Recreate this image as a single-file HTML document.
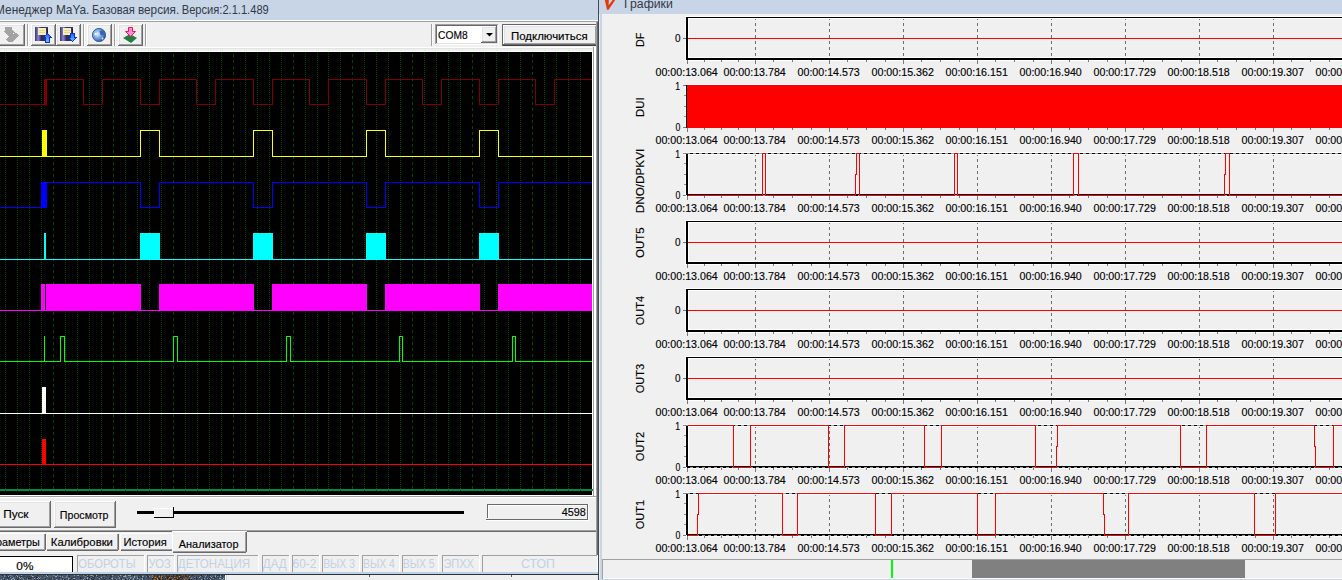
<!DOCTYPE html>
<html><head><meta charset="utf-8"><style>
html,body{margin:0;padding:0;width:1342px;height:580px;overflow:hidden;background:#f0f0f0}
svg{display:block}
text{font-family:"Liberation Sans",sans-serif}
</style></head><body>
<svg width="1342" height="580" viewBox="0 0 1342 580" shape-rendering="crispEdges">
<rect x="0" y="0" width="1342" height="580" fill="#f0f0f0" />
<rect x="0" y="0" width="598" height="20" fill="#c8d5e6" />
<text transform="translate(-4.95 14) scale(0.9643 1)" font-size="12.3" fill="#323a46" stroke="#323a46" stroke-width="0">Менеджер</text>
<text transform="translate(55.95 14) scale(0.9652 1)" font-size="12.3" fill="#323a46" stroke="#323a46" stroke-width="0">MaYa.</text>
<text transform="translate(92.00 14) scale(0.9115 1)" font-size="12.3" fill="#323a46" stroke="#323a46" stroke-width="0">Базовая</text>
<text transform="translate(137.98 14) scale(0.9552 1)" font-size="12.3" fill="#323a46" stroke="#323a46" stroke-width="0">версия.</text>
<text transform="translate(181.71 14) scale(0.9049 1)" font-size="12.3" fill="#323a46" stroke="#323a46" stroke-width="0">Версия:2.1.1.489</text>
<rect x="0" y="20" width="598" height="1" fill="#ffffff" />
<rect x="0" y="21" width="598" height="1" fill="#a0a0a0" />
<rect x="0" y="22" width="596" height="25" fill="#f0f0f0" />
<rect x="-2" y="24" width="27" height="22" fill="#f0f0f0" />
<rect x="-2" y="24" width="27" height="1" fill="#ffffff" />
<rect x="-2" y="24" width="1" height="22" fill="#ffffff" />
<rect x="-2" y="45" width="27" height="1" fill="#696969" />
<rect x="24" y="24" width="1" height="22" fill="#696969" />
<rect x="-1" y="44" width="25" height="1" fill="#a0a0a0" />
<rect x="23" y="25" width="1" height="20" fill="#a0a0a0" />
<rect x="-1" y="25" width="24" height="1" fill="#e3e3e3" />
<rect x="-1" y="25" width="1" height="19" fill="#e3e3e3" />
<rect x="27" y="24" width="1" height="22" fill="#a0a0a0" />
<rect x="28" y="24" width="1" height="22" fill="#ffffff" />
<rect x="31" y="24" width="25" height="22" fill="#f0f0f0" />
<rect x="31" y="24" width="25" height="1" fill="#ffffff" />
<rect x="31" y="24" width="1" height="22" fill="#ffffff" />
<rect x="31" y="45" width="25" height="1" fill="#696969" />
<rect x="55" y="24" width="1" height="22" fill="#696969" />
<rect x="32" y="44" width="23" height="1" fill="#a0a0a0" />
<rect x="54" y="25" width="1" height="20" fill="#a0a0a0" />
<rect x="32" y="25" width="22" height="1" fill="#e3e3e3" />
<rect x="32" y="25" width="1" height="19" fill="#e3e3e3" />
<rect x="56" y="24" width="25" height="22" fill="#f0f0f0" />
<rect x="56" y="24" width="25" height="1" fill="#ffffff" />
<rect x="56" y="24" width="1" height="22" fill="#ffffff" />
<rect x="56" y="45" width="25" height="1" fill="#696969" />
<rect x="80" y="24" width="1" height="22" fill="#696969" />
<rect x="57" y="44" width="23" height="1" fill="#a0a0a0" />
<rect x="79" y="25" width="1" height="20" fill="#a0a0a0" />
<rect x="57" y="25" width="22" height="1" fill="#e3e3e3" />
<rect x="57" y="25" width="1" height="19" fill="#e3e3e3" />
<rect x="83" y="24" width="1" height="22" fill="#a0a0a0" />
<rect x="84" y="24" width="1" height="22" fill="#ffffff" />
<rect x="87" y="24" width="25" height="22" fill="#f0f0f0" />
<rect x="87" y="24" width="25" height="1" fill="#ffffff" />
<rect x="87" y="24" width="1" height="22" fill="#ffffff" />
<rect x="87" y="45" width="25" height="1" fill="#696969" />
<rect x="111" y="24" width="1" height="22" fill="#696969" />
<rect x="88" y="44" width="23" height="1" fill="#a0a0a0" />
<rect x="110" y="25" width="1" height="20" fill="#a0a0a0" />
<rect x="88" y="25" width="22" height="1" fill="#e3e3e3" />
<rect x="88" y="25" width="1" height="19" fill="#e3e3e3" />
<rect x="114" y="24" width="1" height="22" fill="#a0a0a0" />
<rect x="115" y="24" width="1" height="22" fill="#ffffff" />
<rect x="118" y="24" width="25" height="22" fill="#f0f0f0" />
<rect x="118" y="24" width="25" height="1" fill="#ffffff" />
<rect x="118" y="24" width="1" height="22" fill="#ffffff" />
<rect x="118" y="45" width="25" height="1" fill="#696969" />
<rect x="142" y="24" width="1" height="22" fill="#696969" />
<rect x="119" y="44" width="23" height="1" fill="#a0a0a0" />
<rect x="141" y="25" width="1" height="20" fill="#a0a0a0" />
<rect x="119" y="25" width="22" height="1" fill="#e3e3e3" />
<rect x="119" y="25" width="1" height="19" fill="#e3e3e3" />
<rect x="145" y="24" width="1" height="22" fill="#a0a0a0" />
<rect x="146" y="24" width="1" height="22" fill="#ffffff" />
<rect x="431" y="24" width="1" height="22" fill="#a0a0a0" />
<rect x="432" y="24" width="1" height="22" fill="#ffffff" />
<path d="M5 27 L12 27 L12 30 L14 32 L16 33 L19 35 L16 38 L13 41 L12 42 L9 42 L6 40 L6 39 L9 37 L4 32 L4 31 L5 30 Z" fill="#a3a3a3" stroke="none" stroke-width="1" />
<rect x="13" y="33" width="1" height="1" fill="#ffffff" />
<defs><linearGradient id="fl" x1="0" y1="0" x2="1" y2="0"><stop offset="0" stop-color="#3a3470"/><stop offset="0.25" stop-color="#8a84d0"/><stop offset="0.5" stop-color="#2e2a5a"/><stop offset="1" stop-color="#3c3868"/></linearGradient><linearGradient id="ar" x1="0" y1="0" x2="0" y2="1"><stop offset="0" stop-color="#1060ff"/><stop offset="1" stop-color="#80c0ff"/></linearGradient><radialGradient id="gl" cx="0.38" cy="0.42" r="0.65"><stop offset="0" stop-color="#e4effc"/><stop offset="0.5" stop-color="#7aa4dc"/><stop offset="1" stop-color="#1f4f9a"/></radialGradient></defs>
<rect x="35" y="27" width="13" height="14" fill="url(#fl)" />
<rect x="38" y="28" width="8" height="7" fill="#f6f0b8" />
<rect x="39" y="30" width="6" height="1" fill="#e2d890" />
<rect x="39" y="32" width="6" height="1" fill="#e2d890" />
<rect x="47" y="29" width="1" height="12" fill="#1a1838" />
<path d="M47.5 33.5 L51.5 37.5 L49.5 37.5 L49.5 42.5 L45.5 42.5 L45.5 37.5 L43.5 37.5 Z" fill="url(#ar)" stroke="#0a30d0" stroke-width="1" />
<rect x="60" y="27" width="13" height="14" fill="url(#fl)" />
<rect x="63" y="28" width="8" height="7" fill="#f6f0b8" />
<rect x="64" y="30" width="6" height="1" fill="#e2d890" />
<rect x="64" y="32" width="6" height="1" fill="#e2d890" />
<rect x="72" y="29" width="1" height="12" fill="#1a1838" />
<path d="M70.5 33.5 L74.5 33.5 L74.5 37.5 L76.5 37.5 L72.5 41.5 L68.5 37.5 L70.5 37.5 Z" fill="url(#ar)" stroke="#0a30d0" stroke-width="1" />
<circle cx="99" cy="35" r="6.6" fill="url(#gl)" stroke="#2a5aa8" stroke-width="0.9" shape-rendering="auto"/>
<path d="M99.5 31 L103 30.5 L104.5 33 L103 35.5 L100.5 35 Z" fill="#3568b0" shape-rendering="auto"/>
<circle cx="95.5" cy="34" r="1" fill="#ffffff" shape-rendering="auto"/>
<circle cx="102.5" cy="38.5" r="0.9" fill="#f0f8ff" shape-rendering="auto"/>
<path d="M123 38 L130 34 L137 38 L131 43 Z" fill="#237c3e" stroke="none" stroke-width="1" shape-rendering="auto"/>
<path d="M128.5 27.5 L132.5 27.5 L132.5 31.5 L135.5 31.5 L130.5 36.5 L125.5 31.5 L128.5 31.5 Z" fill="#f590e0" stroke="#ff1040" stroke-width="1" shape-rendering="auto"/>
<rect x="435" y="24" width="63" height="20" fill="#ffffff" />
<rect x="435" y="24" width="63" height="1" fill="#a0a0a0" />
<rect x="435" y="24" width="1" height="20" fill="#a0a0a0" />
<rect x="436" y="25" width="61" height="1" fill="#696969" />
<rect x="436" y="25" width="1" height="18" fill="#696969" />
<rect x="435" y="44" width="64" height="1" fill="#ffffff" />
<rect x="498" y="24" width="1" height="21" fill="#ffffff" />
<rect x="436" y="43" width="62" height="1" fill="#e3e3e3" />
<rect x="497" y="25" width="1" height="19" fill="#e3e3e3" />
<rect x="481" y="26" width="16" height="17" fill="#f0f0f0" />
<rect x="481" y="26" width="16" height="1" fill="#ffffff" />
<rect x="481" y="26" width="1" height="17" fill="#ffffff" />
<rect x="481" y="42" width="16" height="1" fill="#696969" />
<rect x="496" y="26" width="1" height="17" fill="#696969" />
<rect x="482" y="41" width="14" height="1" fill="#a0a0a0" />
<rect x="495" y="27" width="1" height="15" fill="#a0a0a0" />
<rect x="482" y="27" width="13" height="1" fill="#e3e3e3" />
<rect x="482" y="27" width="1" height="14" fill="#e3e3e3" />
<path d="M486 33 L493 33 L489.5 36.5 Z" fill="#000" stroke="none" stroke-width="1" shape-rendering="auto"/>
<text transform="translate(438.09 39) scale(0.9286 1)" font-size="11" fill="#000" stroke="#000" stroke-width="0.15">COM8</text>
<rect x="502" y="24" width="96" height="22" fill="#646464" />
<rect x="503" y="45" width="95" height="1" fill="#404040" />
<rect x="597" y="25" width="1" height="21" fill="#404040" />
<rect x="503" y="25" width="94" height="20" fill="#f0f0f0" />
<rect x="503" y="25" width="94" height="1" fill="#ffffff" />
<rect x="503" y="25" width="1" height="20" fill="#ffffff" />
<rect x="503" y="44" width="94" height="1" fill="#696969" />
<rect x="596" y="25" width="1" height="20" fill="#696969" />
<rect x="504" y="43" width="92" height="1" fill="#a0a0a0" />
<rect x="595" y="26" width="1" height="18" fill="#a0a0a0" />
<rect x="504" y="26" width="91" height="1" fill="#e3e3e3" />
<rect x="504" y="26" width="1" height="17" fill="#e3e3e3" />
<text transform="translate(510.98 40) scale(1.0423 1)" font-size="11" fill="#000" stroke="#000" stroke-width="0.15">Подключиться</text>
<rect x="0" y="47" width="592" height="1" fill="#ffffff" />
<rect x="0" y="48" width="592" height="1" fill="#e3e3e3" />
<rect x="0" y="51" width="592" height="1" fill="#ffffff" />
<rect x="592" y="51" width="1" height="445" fill="#ffffff" />
<rect x="593" y="47" width="1" height="451" fill="#a0a0a0" />
<rect x="594" y="47" width="1" height="451" fill="#ffffff" />
<rect x="595" y="47" width="1" height="451" fill="#ffffff" />
<rect x="596" y="22" width="1" height="551" fill="#a0a0a0" />
<rect x="597" y="22" width="1" height="551" fill="#696969" />
<rect x="598" y="0" width="1" height="581" fill="#4a4a4a" />
<rect x="599" y="0" width="3" height="580" fill="#c8d5e6" />
<rect x="599" y="14" width="1" height="566" fill="#e6edf7" />
<rect x="0" y="52" width="592" height="443" fill="#000" />
<rect x="0" y="495" width="593" height="1" fill="#ffffff" />
<rect x="0" y="496" width="596" height="1" fill="#a0a0a0" />
<rect x="0" y="497" width="596" height="1" fill="#ffffff" />
<rect x="0" y="489" width="593" height="2" fill="#008c46" />
<line x1="5.5" y1="52" x2="5.5" y2="492" stroke="#004800" stroke-width="1" stroke-dasharray="1 1" stroke-dashoffset="-2"/>
<line x1="17.5" y1="52" x2="17.5" y2="492" stroke="#004800" stroke-width="1" stroke-dasharray="1 1" stroke-dashoffset="-2"/>
<line x1="29.5" y1="52" x2="29.5" y2="492" stroke="#004800" stroke-width="1" stroke-dasharray="1 1" stroke-dashoffset="-2"/>
<line x1="41.5" y1="52" x2="41.5" y2="492" stroke="#004800" stroke-width="1" stroke-dasharray="1 1" stroke-dashoffset="-2"/>
<line x1="53.5" y1="52" x2="53.5" y2="492" stroke="#004800" stroke-width="1" stroke-dasharray="3 3" stroke-dashoffset="-2"/>
<line x1="65.5" y1="52" x2="65.5" y2="492" stroke="#004800" stroke-width="1" stroke-dasharray="1 1" stroke-dashoffset="-2"/>
<line x1="77.5" y1="52" x2="77.5" y2="492" stroke="#004800" stroke-width="1" stroke-dasharray="1 1" stroke-dashoffset="-2"/>
<line x1="89.5" y1="52" x2="89.5" y2="492" stroke="#004800" stroke-width="1" stroke-dasharray="1 1" stroke-dashoffset="-2"/>
<line x1="101.5" y1="52" x2="101.5" y2="492" stroke="#004800" stroke-width="1" stroke-dasharray="1 1" stroke-dashoffset="-2"/>
<line x1="113.5" y1="52" x2="113.5" y2="492" stroke="#004800" stroke-width="1" stroke-dasharray="3 3" stroke-dashoffset="-2"/>
<line x1="125.5" y1="52" x2="125.5" y2="492" stroke="#004800" stroke-width="1" stroke-dasharray="1 1" stroke-dashoffset="-2"/>
<line x1="137.5" y1="52" x2="137.5" y2="492" stroke="#004800" stroke-width="1" stroke-dasharray="1 1" stroke-dashoffset="-2"/>
<line x1="149.5" y1="52" x2="149.5" y2="492" stroke="#004800" stroke-width="1" stroke-dasharray="1 1" stroke-dashoffset="-2"/>
<line x1="161.5" y1="52" x2="161.5" y2="492" stroke="#004800" stroke-width="1" stroke-dasharray="1 1" stroke-dashoffset="-2"/>
<line x1="173.5" y1="52" x2="173.5" y2="492" stroke="#004800" stroke-width="1" stroke-dasharray="3 3" stroke-dashoffset="-2"/>
<line x1="185.5" y1="52" x2="185.5" y2="492" stroke="#004800" stroke-width="1" stroke-dasharray="1 1" stroke-dashoffset="-2"/>
<line x1="197.5" y1="52" x2="197.5" y2="492" stroke="#004800" stroke-width="1" stroke-dasharray="1 1" stroke-dashoffset="-2"/>
<line x1="209.5" y1="52" x2="209.5" y2="492" stroke="#004800" stroke-width="1" stroke-dasharray="1 1" stroke-dashoffset="-2"/>
<line x1="221.5" y1="52" x2="221.5" y2="492" stroke="#004800" stroke-width="1" stroke-dasharray="1 1" stroke-dashoffset="-2"/>
<line x1="233.5" y1="52" x2="233.5" y2="492" stroke="#004800" stroke-width="1" stroke-dasharray="3 3" stroke-dashoffset="-2"/>
<line x1="245.5" y1="52" x2="245.5" y2="492" stroke="#004800" stroke-width="1" stroke-dasharray="1 1" stroke-dashoffset="-2"/>
<line x1="257.5" y1="52" x2="257.5" y2="492" stroke="#004800" stroke-width="1" stroke-dasharray="1 1" stroke-dashoffset="-2"/>
<line x1="269.5" y1="52" x2="269.5" y2="492" stroke="#004800" stroke-width="1" stroke-dasharray="1 1" stroke-dashoffset="-2"/>
<line x1="281.5" y1="52" x2="281.5" y2="492" stroke="#004800" stroke-width="1" stroke-dasharray="1 1" stroke-dashoffset="-2"/>
<line x1="293.5" y1="52" x2="293.5" y2="492" stroke="#004800" stroke-width="1" stroke-dasharray="3 3" stroke-dashoffset="-2"/>
<line x1="305.5" y1="52" x2="305.5" y2="492" stroke="#004800" stroke-width="1" stroke-dasharray="1 1" stroke-dashoffset="-2"/>
<line x1="317.5" y1="52" x2="317.5" y2="492" stroke="#004800" stroke-width="1" stroke-dasharray="1 1" stroke-dashoffset="-2"/>
<line x1="328.5" y1="52" x2="328.5" y2="492" stroke="#004800" stroke-width="1" stroke-dasharray="1 1" stroke-dashoffset="-2"/>
<line x1="340.5" y1="52" x2="340.5" y2="492" stroke="#004800" stroke-width="1" stroke-dasharray="1 1" stroke-dashoffset="-2"/>
<line x1="352.5" y1="52" x2="352.5" y2="492" stroke="#004800" stroke-width="1" stroke-dasharray="3 3" stroke-dashoffset="-2"/>
<line x1="364.5" y1="52" x2="364.5" y2="492" stroke="#004800" stroke-width="1" stroke-dasharray="1 1" stroke-dashoffset="-2"/>
<line x1="376.5" y1="52" x2="376.5" y2="492" stroke="#004800" stroke-width="1" stroke-dasharray="1 1" stroke-dashoffset="-2"/>
<line x1="388.5" y1="52" x2="388.5" y2="492" stroke="#004800" stroke-width="1" stroke-dasharray="1 1" stroke-dashoffset="-2"/>
<line x1="400.5" y1="52" x2="400.5" y2="492" stroke="#004800" stroke-width="1" stroke-dasharray="1 1" stroke-dashoffset="-2"/>
<line x1="412.5" y1="52" x2="412.5" y2="492" stroke="#004800" stroke-width="1" stroke-dasharray="3 3" stroke-dashoffset="-2"/>
<line x1="424.5" y1="52" x2="424.5" y2="492" stroke="#004800" stroke-width="1" stroke-dasharray="1 1" stroke-dashoffset="-2"/>
<line x1="436.5" y1="52" x2="436.5" y2="492" stroke="#004800" stroke-width="1" stroke-dasharray="1 1" stroke-dashoffset="-2"/>
<line x1="448.5" y1="52" x2="448.5" y2="492" stroke="#004800" stroke-width="1" stroke-dasharray="1 1" stroke-dashoffset="-2"/>
<line x1="460.5" y1="52" x2="460.5" y2="492" stroke="#004800" stroke-width="1" stroke-dasharray="1 1" stroke-dashoffset="-2"/>
<line x1="472.5" y1="52" x2="472.5" y2="492" stroke="#004800" stroke-width="1" stroke-dasharray="3 3" stroke-dashoffset="-2"/>
<line x1="484.5" y1="52" x2="484.5" y2="492" stroke="#004800" stroke-width="1" stroke-dasharray="1 1" stroke-dashoffset="-2"/>
<line x1="496.5" y1="52" x2="496.5" y2="492" stroke="#004800" stroke-width="1" stroke-dasharray="1 1" stroke-dashoffset="-2"/>
<line x1="508.5" y1="52" x2="508.5" y2="492" stroke="#004800" stroke-width="1" stroke-dasharray="1 1" stroke-dashoffset="-2"/>
<line x1="520.5" y1="52" x2="520.5" y2="492" stroke="#004800" stroke-width="1" stroke-dasharray="1 1" stroke-dashoffset="-2"/>
<line x1="532.5" y1="52" x2="532.5" y2="492" stroke="#004800" stroke-width="1" stroke-dasharray="3 3" stroke-dashoffset="-2"/>
<line x1="544.5" y1="52" x2="544.5" y2="492" stroke="#004800" stroke-width="1" stroke-dasharray="1 1" stroke-dashoffset="-2"/>
<line x1="556.5" y1="52" x2="556.5" y2="492" stroke="#004800" stroke-width="1" stroke-dasharray="1 1" stroke-dashoffset="-2"/>
<line x1="568.5" y1="52" x2="568.5" y2="492" stroke="#004800" stroke-width="1" stroke-dasharray="1 1" stroke-dashoffset="-2"/>
<line x1="580.5" y1="52" x2="580.5" y2="492" stroke="#004800" stroke-width="1" stroke-dasharray="1 1" stroke-dashoffset="-2"/>
<path d="M0.5 104.5 L44.5 104.5 L44.5 79.5 L83.5 79.5 L83.5 104.5 L102.5 104.5 L102.5 79.5 L140.5 79.5 L140.5 104.5 L159.5 104.5 L159.5 79.5 L196.5 79.5 L196.5 104.5 L215.5 104.5 L215.5 79.5 L253.5 79.5 L253.5 104.5 L272.5 104.5 L272.5 79.5 L309.5 79.5 L309.5 104.5 L328.5 104.5 L328.5 79.5 L366.5 79.5 L366.5 104.5 L385.5 104.5 L385.5 79.5 L422.5 79.5 L422.5 104.5 L441.5 104.5 L441.5 79.5 L479.5 79.5 L479.5 104.5 L498.5 104.5 L498.5 79.5 L535.5 79.5 L535.5 104.5 L554.5 104.5 L554.5 79.5 L591.5 79.5" fill="none" stroke="#800000" stroke-width="1" stroke-linecap="square" shape-rendering="crispEdges"/>
<rect x="44" y="79" width="3" height="26" fill="#800000" />
<path d="M0.5 156.5 L140.5 156.5 L140.5 130.5 L159.5 130.5 L159.5 156.5 L253.5 156.5 L253.5 130.5 L272.5 130.5 L272.5 156.5 L366.5 156.5 L366.5 130.5 L385.5 130.5 L385.5 156.5 L479.5 156.5 L479.5 130.5 L498.5 130.5 L498.5 156.5 L591.5 156.5" fill="none" stroke="#ffff00" stroke-width="1" stroke-linecap="square" shape-rendering="crispEdges"/>
<rect x="42" y="130" width="5" height="27" fill="#ffff00" />
<path d="M0.5 207.5 L41.5 207.5 L41.5 182.5 L140.5 182.5 L140.5 207.5 L159.5 207.5 L159.5 182.5 L253.5 182.5 L253.5 207.5 L272.5 207.5 L272.5 182.5 L366.5 182.5 L366.5 207.5 L385.5 207.5 L385.5 182.5 L479.5 182.5 L479.5 207.5 L498.5 207.5 L498.5 182.5 L591.5 182.5" fill="none" stroke="#0000ff" stroke-width="1" stroke-linecap="square" shape-rendering="crispEdges"/>
<rect x="41" y="182" width="6" height="26" fill="#0000ff" />
<path d="M0.5 259.5 L591.5 259.5" fill="none" stroke="#00ffff" stroke-width="1" stroke-linecap="square" shape-rendering="crispEdges"/>
<rect x="44" y="233" width="2" height="26" fill="#00ffff" />
<rect x="140" y="233" width="20" height="27" fill="#00ffff" />
<rect x="253" y="233" width="20" height="27" fill="#00ffff" />
<rect x="366" y="233" width="20" height="27" fill="#00ffff" />
<rect x="479" y="233" width="20" height="27" fill="#00ffff" />
<path d="M0.5 310.5 L591.5 310.5" fill="none" stroke="#ff00ff" stroke-width="1" stroke-linecap="square" shape-rendering="crispEdges"/>
<rect x="41" y="284" width="100" height="27" fill="#ff00ff" />
<rect x="159" y="284" width="95" height="27" fill="#ff00ff" />
<rect x="272" y="284" width="95" height="27" fill="#ff00ff" />
<rect x="385" y="284" width="95" height="27" fill="#ff00ff" />
<rect x="498" y="284" width="94" height="27" fill="#ff00ff" />
<rect x="45" y="284" width="1" height="26" fill="#000" />
<path d="M0.5 361.5 L60.5 361.5 L60.5 336.5 L64.5 336.5 L64.5 361.5 L173.5 361.5 L173.5 336.5 L177.5 336.5 L177.5 361.5 L286.5 361.5 L286.5 336.5 L290.5 336.5 L290.5 361.5 L399.5 361.5 L399.5 336.5 L402.5 336.5 L402.5 361.5 L512.5 361.5 L512.5 336.5 L515.5 336.5 L515.5 361.5 L591.5 361.5" fill="none" stroke="#00ff00" stroke-width="1" stroke-linecap="square" shape-rendering="crispEdges"/>
<rect x="44" y="336" width="1" height="26" fill="#00ff00" />
<path d="M0.5 413.5 L591.5 413.5" fill="none" stroke="#ffffff" stroke-width="1" stroke-linecap="square" shape-rendering="crispEdges"/>
<rect x="42" y="387" width="4" height="27" fill="#ffffff" />
<path d="M0.5 464.5 L591.5 464.5" fill="none" stroke="#ff0000" stroke-width="1" stroke-linecap="square" shape-rendering="crispEdges"/>
<rect x="42" y="439" width="4" height="26" fill="#ff0000" />
<rect x="-2" y="501" width="53" height="27" fill="#f0f0f0" />
<rect x="-2" y="501" width="53" height="1" fill="#ffffff" />
<rect x="-2" y="501" width="1" height="27" fill="#ffffff" />
<rect x="-2" y="527" width="53" height="1" fill="#696969" />
<rect x="50" y="501" width="1" height="27" fill="#696969" />
<rect x="-1" y="526" width="51" height="1" fill="#a0a0a0" />
<rect x="49" y="502" width="1" height="25" fill="#a0a0a0" />
<rect x="-1" y="502" width="50" height="1" fill="#e3e3e3" />
<rect x="-1" y="502" width="1" height="24" fill="#e3e3e3" />
<text transform="translate(3.15 518) scale(1.0760 1)" font-size="11" fill="#000" stroke="#000" stroke-width="0.15">Пуск</text>
<rect x="54" y="501" width="62" height="27" fill="#f0f0f0" />
<rect x="54" y="501" width="62" height="1" fill="#ffffff" />
<rect x="54" y="501" width="1" height="27" fill="#ffffff" />
<rect x="54" y="527" width="62" height="1" fill="#696969" />
<rect x="115" y="501" width="1" height="27" fill="#696969" />
<rect x="55" y="526" width="60" height="1" fill="#a0a0a0" />
<rect x="114" y="502" width="1" height="25" fill="#a0a0a0" />
<rect x="55" y="502" width="59" height="1" fill="#e3e3e3" />
<rect x="55" y="502" width="1" height="24" fill="#e3e3e3" />
<text transform="translate(59.85 519) scale(0.9694 1)" font-size="11" fill="#000" stroke="#000" stroke-width="0.15">Просмотр</text>
<rect x="137" y="511" width="327" height="3" fill="#000" />
<rect x="154" y="508" width="20" height="10" fill="#f0f0f0" />
<rect x="154" y="508" width="19" height="1" fill="#ffffff" />
<rect x="154" y="508" width="1" height="9" fill="#ffffff" />
<rect x="154" y="517" width="20" height="1" fill="#000" />
<rect x="173" y="507" width="1" height="11" fill="#000" />
<rect x="486" y="504" width="102" height="16" fill="#f0f0f0" />
<rect x="487" y="504" width="101" height="1" fill="#696969" />
<rect x="487" y="504" width="1" height="14" fill="#696969" />
<rect x="486" y="519" width="102" height="1" fill="#696969" />
<rect x="587" y="504" width="1" height="16" fill="#696969" />
<rect x="486" y="520" width="103" height="1" fill="#ffffff" />
<rect x="588" y="504" width="1" height="17" fill="#ffffff" />
<rect x="488" y="505" width="99" height="1" fill="#ffffff" />
<rect x="488" y="505" width="1" height="13" fill="#ffffff" />
<text transform="translate(561.68 516) scale(0.9868 1)" font-size="11" fill="#000" stroke="#000" stroke-width="0.15">4598</text>
<rect x="0" y="530" width="596" height="1" fill="#a0a0a0" />
<rect x="0" y="531" width="596" height="1" fill="#696969" />
<rect x="0" y="532" width="596" height="40" fill="#f0f0f0" />
<rect x="-5" y="533" width="51" height="18" fill="#f0f0f0" />
<rect x="-4" y="533" width="49" height="1" fill="#ffffff" />
<rect x="-5" y="534" width="1" height="16" fill="#ffffff" />
<rect x="45" y="534" width="1" height="16" fill="#696969" />
<rect x="44" y="534" width="1" height="16" fill="#a0a0a0" />
<rect x="-4" y="550" width="49" height="1" fill="#696969" />
<rect x="-4" y="549" width="48" height="1" fill="#a0a0a0" />
<text transform="translate(-17.87 546) scale(0.9846 1)" font-size="11" fill="#000" stroke="#000" stroke-width="0.15">Параметры</text>
<rect x="46" y="533" width="73" height="18" fill="#f0f0f0" />
<rect x="47" y="533" width="71" height="1" fill="#ffffff" />
<rect x="46" y="534" width="1" height="16" fill="#ffffff" />
<rect x="118" y="534" width="1" height="16" fill="#696969" />
<rect x="117" y="534" width="1" height="16" fill="#a0a0a0" />
<rect x="47" y="550" width="71" height="1" fill="#696969" />
<rect x="47" y="549" width="70" height="1" fill="#a0a0a0" />
<text transform="translate(50.79 546) scale(1.0290 1)" font-size="11" fill="#000" stroke="#000" stroke-width="0.15">Калибровки</text>
<rect x="120" y="533" width="55" height="18" fill="#f0f0f0" />
<rect x="121" y="533" width="53" height="1" fill="#ffffff" />
<rect x="120" y="534" width="1" height="16" fill="#ffffff" />
<rect x="174" y="534" width="1" height="16" fill="#696969" />
<rect x="173" y="534" width="1" height="16" fill="#a0a0a0" />
<rect x="121" y="550" width="53" height="1" fill="#696969" />
<rect x="121" y="549" width="52" height="1" fill="#a0a0a0" />
<text transform="translate(123.51 546) scale(1.0163 1)" font-size="11" fill="#000" stroke="#000" stroke-width="0.15">История</text>
<rect x="172" y="531" width="75" height="22" fill="#f0f0f0" />
<rect x="173" y="531" width="73" height="1" fill="#ffffff" />
<rect x="172" y="532" width="1" height="20" fill="#ffffff" />
<rect x="246" y="532" width="1" height="20" fill="#696969" />
<rect x="245" y="532" width="1" height="20" fill="#a0a0a0" />
<rect x="173" y="552" width="73" height="1" fill="#696969" />
<rect x="173" y="551" width="72" height="1" fill="#a0a0a0" />
<text transform="translate(178.80 548) scale(0.9928 1)" font-size="11" fill="#000" stroke="#000" stroke-width="0.15">Анализатор</text>
<rect x="0" y="556" width="73" height="16" fill="#ffffff" />
<rect x="0" y="556" width="73" height="1" fill="#000" />
<rect x="72" y="556" width="1" height="16" fill="#000" />
<text transform="translate(16.33 570) scale(1.0750 1)" font-size="11" fill="#000" stroke="#000" stroke-width="0.15">0%</text>
<rect x="77" y="555" width="68" height="17" fill="#f0f0f0" />
<rect x="77" y="555" width="68" height="1" fill="#a0a0a0" />
<rect x="77" y="555" width="1" height="17" fill="#a0a0a0" />
<rect x="144" y="555" width="1" height="17" fill="#ffffff" />
<text transform="translate(78.30 568) scale(0.9326 1)" font-size="12" fill="#c3d1e3" stroke="#c3d1e3" stroke-width="0">ОБОРОТЫ</text>
<rect x="147" y="555" width="28" height="17" fill="#f0f0f0" />
<rect x="147" y="555" width="28" height="1" fill="#a0a0a0" />
<rect x="147" y="555" width="1" height="17" fill="#a0a0a0" />
<rect x="174" y="555" width="1" height="17" fill="#ffffff" />
<text transform="translate(148.56 568) scale(0.9405 1)" font-size="12" fill="#c3d1e3" stroke="#c3d1e3" stroke-width="0">УОЗ</text>
<rect x="177" y="555" width="82" height="17" fill="#f0f0f0" />
<rect x="177" y="555" width="82" height="1" fill="#a0a0a0" />
<rect x="177" y="555" width="1" height="17" fill="#a0a0a0" />
<rect x="258" y="555" width="1" height="17" fill="#ffffff" />
<text transform="translate(177.84 568) scale(0.9616 1)" font-size="12" fill="#c3d1e3" stroke="#c3d1e3" stroke-width="0">ДЕТОНАЦИЯ</text>
<rect x="262" y="555" width="28" height="17" fill="#f0f0f0" />
<rect x="262" y="555" width="28" height="1" fill="#a0a0a0" />
<rect x="262" y="555" width="1" height="17" fill="#a0a0a0" />
<rect x="289" y="555" width="1" height="17" fill="#ffffff" />
<text transform="translate(262.74 568) scale(0.9746 1)" font-size="12" fill="#c3d1e3" stroke="#c3d1e3" stroke-width="0">ДАД</text>
<rect x="292" y="555" width="28" height="17" fill="#f0f0f0" />
<rect x="292" y="555" width="28" height="1" fill="#a0a0a0" />
<rect x="292" y="555" width="1" height="17" fill="#a0a0a0" />
<rect x="319" y="555" width="1" height="17" fill="#ffffff" />
<text transform="translate(292.50 568) scale(0.9956 1)" font-size="12" fill="#c3d1e3" stroke="#c3d1e3" stroke-width="0">60-2</text>
<rect x="322" y="555" width="38" height="17" fill="#f0f0f0" />
<rect x="322" y="555" width="38" height="1" fill="#a0a0a0" />
<rect x="322" y="555" width="1" height="17" fill="#a0a0a0" />
<rect x="359" y="555" width="1" height="17" fill="#ffffff" />
<text transform="translate(323.17 568) scale(0.8675 1)" font-size="12" fill="#c3d1e3" stroke="#c3d1e3" stroke-width="0">ВЫХ 3</text>
<rect x="362" y="555" width="38" height="17" fill="#f0f0f0" />
<rect x="362" y="555" width="38" height="1" fill="#a0a0a0" />
<rect x="362" y="555" width="1" height="17" fill="#a0a0a0" />
<rect x="399" y="555" width="1" height="17" fill="#ffffff" />
<text transform="translate(362.96 568) scale(0.8702 1)" font-size="12" fill="#c3d1e3" stroke="#c3d1e3" stroke-width="0">ВЫХ 4</text>
<rect x="402" y="555" width="37" height="17" fill="#f0f0f0" />
<rect x="402" y="555" width="37" height="1" fill="#a0a0a0" />
<rect x="402" y="555" width="1" height="17" fill="#a0a0a0" />
<rect x="438" y="555" width="1" height="17" fill="#ffffff" />
<text transform="translate(402.87 568) scale(0.8675 1)" font-size="12" fill="#c3d1e3" stroke="#c3d1e3" stroke-width="0">ВЫХ 5</text>
<rect x="442" y="555" width="38" height="17" fill="#f0f0f0" />
<rect x="442" y="555" width="38" height="1" fill="#a0a0a0" />
<rect x="442" y="555" width="1" height="17" fill="#a0a0a0" />
<rect x="479" y="555" width="1" height="17" fill="#ffffff" />
<text transform="translate(443.39 568) scale(0.9184 1)" font-size="12" fill="#c3d1e3" stroke="#c3d1e3" stroke-width="0">ЭПХХ</text>
<rect x="482" y="555" width="116" height="17" fill="#f0f0f0" />
<rect x="482" y="555" width="116" height="1" fill="#a0a0a0" />
<rect x="482" y="555" width="1" height="17" fill="#a0a0a0" />
<rect x="597" y="555" width="1" height="17" fill="#ffffff" />
<text transform="translate(521.08 568) scale(1.0254 1)" font-size="12" fill="#c3d1e3" stroke="#c3d1e3" stroke-width="0">СТОП</text>
<rect x="0" y="572" width="598" height="2" fill="#bad1ea" />
<rect x="0" y="574" width="225" height="1" fill="#353535" />
<rect x="0" y="575" width="225" height="5" fill="#465468" />
<rect x="1" y="576" width="1" height="1" fill="#5a6a80" />
<rect x="1" y="579" width="1" height="1" fill="#98a8bc" />
<rect x="2" y="575" width="1" height="1" fill="#2a3038" />
<rect x="3" y="575" width="1" height="1" fill="#3a4450" />
<rect x="3" y="578" width="1" height="1" fill="#7a8aa0" />
<rect x="4" y="575" width="1" height="1" fill="#7a8aa0" />
<rect x="4" y="576" width="1" height="1" fill="#7a8aa0" />
<rect x="4" y="579" width="1" height="1" fill="#2a3038" />
<rect x="6" y="575" width="1" height="1" fill="#2a3038" />
<rect x="6" y="577" width="1" height="1" fill="#2a3038" />
<rect x="6" y="579" width="1" height="1" fill="#5a6a80" />
<rect x="7" y="576" width="1" height="1" fill="#3a4450" />
<rect x="7" y="577" width="1" height="1" fill="#2a3038" />
<rect x="7" y="579" width="1" height="1" fill="#7a8aa0" />
<rect x="8" y="576" width="1" height="1" fill="#98a8bc" />
<rect x="8" y="578" width="1" height="1" fill="#2a3038" />
<rect x="9" y="575" width="1" height="1" fill="#5a6a80" />
<rect x="9" y="576" width="1" height="1" fill="#2a3038" />
<rect x="9" y="577" width="1" height="1" fill="#2a3038" />
<rect x="10" y="575" width="1" height="1" fill="#7a8aa0" />
<rect x="10" y="577" width="1" height="1" fill="#98a8bc" />
<rect x="10" y="579" width="1" height="1" fill="#5a6a80" />
<rect x="11" y="575" width="1" height="1" fill="#5a6a80" />
<rect x="11" y="576" width="1" height="1" fill="#5a6a80" />
<rect x="11" y="578" width="1" height="1" fill="#3a4450" />
<rect x="11" y="579" width="1" height="1" fill="#98a8bc" />
<rect x="12" y="576" width="1" height="1" fill="#5a6a80" />
<rect x="12" y="577" width="1" height="1" fill="#2a3038" />
<rect x="12" y="578" width="1" height="1" fill="#98a8bc" />
<rect x="13" y="577" width="1" height="1" fill="#7a8aa0" />
<rect x="13" y="578" width="1" height="1" fill="#98a8bc" />
<rect x="13" y="579" width="1" height="1" fill="#5a6a80" />
<rect x="14" y="575" width="1" height="1" fill="#3a4450" />
<rect x="14" y="576" width="1" height="1" fill="#2a3038" />
<rect x="14" y="577" width="1" height="1" fill="#5a6a80" />
<rect x="14" y="579" width="1" height="1" fill="#98a8bc" />
<rect x="15" y="575" width="1" height="1" fill="#3a4450" />
<rect x="15" y="576" width="1" height="1" fill="#5a6a80" />
<rect x="16" y="575" width="1" height="1" fill="#7a8aa0" />
<rect x="16" y="576" width="1" height="1" fill="#2a3038" />
<rect x="16" y="578" width="1" height="1" fill="#2a3038" />
<rect x="16" y="579" width="1" height="1" fill="#5a6a80" />
<rect x="17" y="576" width="1" height="1" fill="#98a8bc" />
<rect x="17" y="579" width="1" height="1" fill="#2a3038" />
<rect x="18" y="575" width="1" height="1" fill="#5a6a80" />
<rect x="18" y="577" width="1" height="1" fill="#3a4450" />
<rect x="18" y="578" width="1" height="1" fill="#3a4450" />
<rect x="18" y="579" width="1" height="1" fill="#2a3038" />
<rect x="19" y="577" width="1" height="1" fill="#98a8bc" />
<rect x="20" y="576" width="1" height="1" fill="#2a3038" />
<rect x="20" y="578" width="1" height="1" fill="#98a8bc" />
<rect x="20" y="579" width="1" height="1" fill="#2a3038" />
<rect x="21" y="575" width="1" height="1" fill="#98a8bc" />
<rect x="21" y="576" width="1" height="1" fill="#2a3038" />
<rect x="21" y="577" width="1" height="1" fill="#7a8aa0" />
<rect x="22" y="578" width="1" height="1" fill="#7a8aa0" />
<rect x="23" y="576" width="1" height="1" fill="#3a4450" />
<rect x="23" y="578" width="1" height="1" fill="#5a6a80" />
<rect x="23" y="579" width="1" height="1" fill="#7a8aa0" />
<rect x="24" y="576" width="1" height="1" fill="#2a3038" />
<rect x="24" y="577" width="1" height="1" fill="#5a6a80" />
<rect x="24" y="578" width="1" height="1" fill="#2a3038" />
<rect x="25" y="579" width="1" height="1" fill="#3a4450" />
<rect x="26" y="577" width="1" height="1" fill="#2a3038" />
<rect x="27" y="576" width="1" height="1" fill="#2a3038" />
<rect x="27" y="578" width="1" height="1" fill="#5a6a80" />
<rect x="27" y="579" width="1" height="1" fill="#98a8bc" />
<rect x="28" y="577" width="1" height="1" fill="#3a4450" />
<rect x="28" y="578" width="1" height="1" fill="#2a3038" />
<rect x="29" y="576" width="1" height="1" fill="#2a3038" />
<rect x="29" y="578" width="1" height="1" fill="#2a3038" />
<rect x="30" y="577" width="1" height="1" fill="#2a3038" />
<rect x="30" y="578" width="1" height="1" fill="#2a3038" />
<rect x="31" y="575" width="1" height="1" fill="#7a8aa0" />
<rect x="31" y="577" width="1" height="1" fill="#3a4450" />
<rect x="31" y="579" width="1" height="1" fill="#3a4450" />
<rect x="32" y="576" width="1" height="1" fill="#98a8bc" />
<rect x="32" y="579" width="1" height="1" fill="#7a8aa0" />
<rect x="33" y="575" width="1" height="1" fill="#3a4450" />
<rect x="33" y="576" width="1" height="1" fill="#7a8aa0" />
<rect x="34" y="577" width="1" height="1" fill="#2a3038" />
<rect x="34" y="578" width="1" height="1" fill="#98a8bc" />
<rect x="34" y="579" width="1" height="1" fill="#2a3038" />
<rect x="35" y="576" width="1" height="1" fill="#3a4450" />
<rect x="36" y="576" width="1" height="1" fill="#2a3038" />
<rect x="36" y="577" width="1" height="1" fill="#2a3038" />
<rect x="36" y="579" width="1" height="1" fill="#3a4450" />
<rect x="37" y="575" width="1" height="1" fill="#2a3038" />
<rect x="37" y="577" width="1" height="1" fill="#2a3038" />
<rect x="37" y="578" width="1" height="1" fill="#98a8bc" />
<rect x="37" y="579" width="1" height="1" fill="#2a3038" />
<rect x="38" y="577" width="1" height="1" fill="#7a8aa0" />
<rect x="39" y="578" width="1" height="1" fill="#98a8bc" />
<rect x="39" y="579" width="1" height="1" fill="#2a3038" />
<rect x="40" y="577" width="1" height="1" fill="#7a8aa0" />
<rect x="40" y="578" width="1" height="1" fill="#3a4450" />
<rect x="41" y="578" width="1" height="1" fill="#5a6a80" />
<rect x="42" y="575" width="1" height="1" fill="#5a6a80" />
<rect x="42" y="576" width="1" height="1" fill="#3a4450" />
<rect x="43" y="575" width="1" height="1" fill="#3a4450" />
<rect x="43" y="578" width="1" height="1" fill="#5a6a80" />
<rect x="44" y="577" width="1" height="1" fill="#7a8aa0" />
<rect x="45" y="578" width="1" height="1" fill="#2a3038" />
<rect x="45" y="579" width="1" height="1" fill="#2a3038" />
<rect x="46" y="575" width="1" height="1" fill="#98a8bc" />
<rect x="46" y="579" width="1" height="1" fill="#7a8aa0" />
<rect x="47" y="575" width="1" height="1" fill="#2a3038" />
<rect x="47" y="576" width="1" height="1" fill="#98a8bc" />
<rect x="48" y="579" width="1" height="1" fill="#3a4450" />
<rect x="49" y="578" width="1" height="1" fill="#3a4450" />
<rect x="50" y="576" width="1" height="1" fill="#5a6a80" />
<rect x="50" y="579" width="1" height="1" fill="#3a4450" />
<rect x="51" y="578" width="1" height="1" fill="#2a3038" />
<rect x="52" y="577" width="1" height="1" fill="#5a6a80" />
<rect x="52" y="578" width="1" height="1" fill="#7a8aa0" />
<rect x="53" y="575" width="1" height="1" fill="#7a8aa0" />
<rect x="53" y="577" width="1" height="1" fill="#2a3038" />
<rect x="54" y="575" width="1" height="1" fill="#5a6a80" />
<rect x="54" y="579" width="1" height="1" fill="#2a3038" />
<rect x="55" y="576" width="1" height="1" fill="#98a8bc" />
<rect x="56" y="576" width="1" height="1" fill="#98a8bc" />
<rect x="56" y="579" width="1" height="1" fill="#7a8aa0" />
<rect x="57" y="575" width="1" height="1" fill="#7a8aa0" />
<rect x="57" y="576" width="1" height="1" fill="#3a4450" />
<rect x="57" y="577" width="1" height="1" fill="#3a4450" />
<rect x="57" y="578" width="1" height="1" fill="#3a4450" />
<rect x="57" y="579" width="1" height="1" fill="#5a6a80" />
<rect x="59" y="576" width="1" height="1" fill="#5a6a80" />
<rect x="59" y="577" width="1" height="1" fill="#2a3038" />
<rect x="60" y="576" width="1" height="1" fill="#7a8aa0" />
<rect x="61" y="575" width="1" height="1" fill="#3a4450" />
<rect x="61" y="577" width="1" height="1" fill="#3a4450" />
<rect x="61" y="579" width="1" height="1" fill="#7a8aa0" />
<rect x="62" y="576" width="1" height="1" fill="#7a8aa0" />
<rect x="62" y="577" width="1" height="1" fill="#7a8aa0" />
<rect x="62" y="578" width="1" height="1" fill="#2a3038" />
<rect x="62" y="579" width="1" height="1" fill="#3a4450" />
<rect x="63" y="577" width="1" height="1" fill="#5a6a80" />
<rect x="63" y="579" width="1" height="1" fill="#7a8aa0" />
<rect x="64" y="576" width="1" height="1" fill="#3a4450" />
<rect x="64" y="577" width="1" height="1" fill="#5a6a80" />
<rect x="64" y="579" width="1" height="1" fill="#2a3038" />
<rect x="65" y="577" width="1" height="1" fill="#5a6a80" />
<rect x="66" y="576" width="1" height="1" fill="#7a8aa0" />
<rect x="66" y="577" width="1" height="1" fill="#7a8aa0" />
<rect x="67" y="575" width="1" height="1" fill="#7a8aa0" />
<rect x="67" y="576" width="1" height="1" fill="#5a6a80" />
<rect x="67" y="579" width="1" height="1" fill="#3a4450" />
<rect x="68" y="575" width="1" height="1" fill="#3a4450" />
<rect x="68" y="576" width="1" height="1" fill="#3a4450" />
<rect x="68" y="577" width="1" height="1" fill="#5a6a80" />
<rect x="68" y="578" width="1" height="1" fill="#7a8aa0" />
<rect x="68" y="579" width="1" height="1" fill="#98a8bc" />
<rect x="69" y="575" width="1" height="1" fill="#3a4450" />
<rect x="69" y="576" width="1" height="1" fill="#2a3038" />
<rect x="69" y="578" width="1" height="1" fill="#7a8aa0" />
<rect x="69" y="579" width="1" height="1" fill="#2a3038" />
<rect x="70" y="579" width="1" height="1" fill="#2a3038" />
<rect x="71" y="578" width="1" height="1" fill="#2a3038" />
<rect x="72" y="577" width="1" height="1" fill="#3a4450" />
<rect x="73" y="577" width="1" height="1" fill="#2a3038" />
<rect x="73" y="578" width="1" height="1" fill="#98a8bc" />
<rect x="73" y="579" width="1" height="1" fill="#2a3038" />
<rect x="74" y="575" width="1" height="1" fill="#98a8bc" />
<rect x="74" y="578" width="1" height="1" fill="#98a8bc" />
<rect x="75" y="576" width="1" height="1" fill="#3a4450" />
<rect x="75" y="579" width="1" height="1" fill="#3a4450" />
<rect x="76" y="579" width="1" height="1" fill="#5a6a80" />
<rect x="77" y="575" width="1" height="1" fill="#7a8aa0" />
<rect x="77" y="576" width="1" height="1" fill="#3a4450" />
<rect x="78" y="575" width="1" height="1" fill="#98a8bc" />
<rect x="78" y="576" width="1" height="1" fill="#3a4450" />
<rect x="79" y="579" width="1" height="1" fill="#5a6a80" />
<rect x="80" y="577" width="1" height="1" fill="#2a3038" />
<rect x="80" y="578" width="1" height="1" fill="#2a3038" />
<rect x="81" y="577" width="1" height="1" fill="#3a4450" />
<rect x="81" y="578" width="1" height="1" fill="#3a4450" />
<rect x="82" y="575" width="1" height="1" fill="#3a4450" />
<rect x="82" y="577" width="1" height="1" fill="#3a4450" />
<rect x="83" y="575" width="1" height="1" fill="#7a8aa0" />
<rect x="83" y="578" width="1" height="1" fill="#3a4450" />
<rect x="83" y="579" width="1" height="1" fill="#98a8bc" />
<rect x="84" y="576" width="1" height="1" fill="#5a6a80" />
<rect x="84" y="578" width="1" height="1" fill="#7a8aa0" />
<rect x="84" y="579" width="1" height="1" fill="#3a4450" />
<rect x="85" y="575" width="1" height="1" fill="#2a3038" />
<rect x="85" y="576" width="1" height="1" fill="#7a8aa0" />
<rect x="86" y="578" width="1" height="1" fill="#5a6a80" />
<rect x="86" y="579" width="1" height="1" fill="#2a3038" />
<rect x="87" y="575" width="1" height="1" fill="#7a8aa0" />
<rect x="87" y="576" width="1" height="1" fill="#2a3038" />
<rect x="87" y="577" width="1" height="1" fill="#98a8bc" />
<rect x="87" y="578" width="1" height="1" fill="#98a8bc" />
<rect x="88" y="575" width="1" height="1" fill="#3a4450" />
<rect x="88" y="576" width="1" height="1" fill="#2a3038" />
<rect x="88" y="579" width="1" height="1" fill="#2a3038" />
<rect x="89" y="576" width="1" height="1" fill="#3a4450" />
<rect x="89" y="577" width="1" height="1" fill="#2a3038" />
<rect x="90" y="575" width="1" height="1" fill="#7a8aa0" />
<rect x="90" y="578" width="1" height="1" fill="#5a6a80" />
<rect x="90" y="579" width="1" height="1" fill="#7a8aa0" />
<rect x="91" y="575" width="1" height="1" fill="#98a8bc" />
<rect x="91" y="576" width="1" height="1" fill="#2a3038" />
<rect x="91" y="577" width="1" height="1" fill="#5a6a80" />
<rect x="91" y="578" width="1" height="1" fill="#2a3038" />
<rect x="92" y="575" width="1" height="1" fill="#7a8aa0" />
<rect x="92" y="577" width="1" height="1" fill="#3a4450" />
<rect x="92" y="578" width="1" height="1" fill="#3a4450" />
<rect x="92" y="579" width="1" height="1" fill="#2a3038" />
<rect x="93" y="576" width="1" height="1" fill="#7a8aa0" />
<rect x="93" y="577" width="1" height="1" fill="#2a3038" />
<rect x="93" y="578" width="1" height="1" fill="#3a4450" />
<rect x="93" y="579" width="1" height="1" fill="#2a3038" />
<rect x="94" y="575" width="1" height="1" fill="#3a4450" />
<rect x="94" y="576" width="1" height="1" fill="#2a3038" />
<rect x="94" y="577" width="1" height="1" fill="#3a4450" />
<rect x="95" y="575" width="1" height="1" fill="#2a3038" />
<rect x="95" y="576" width="1" height="1" fill="#3a4450" />
<rect x="96" y="575" width="1" height="1" fill="#98a8bc" />
<rect x="96" y="576" width="1" height="1" fill="#5a6a80" />
<rect x="97" y="576" width="1" height="1" fill="#2a3038" />
<rect x="97" y="577" width="1" height="1" fill="#5a6a80" />
<rect x="97" y="579" width="1" height="1" fill="#2a3038" />
<rect x="98" y="575" width="1" height="1" fill="#3a4450" />
<rect x="99" y="575" width="1" height="1" fill="#3a4450" />
<rect x="99" y="577" width="1" height="1" fill="#2a3038" />
<rect x="99" y="578" width="1" height="1" fill="#98a8bc" />
<rect x="99" y="579" width="1" height="1" fill="#5a6a80" />
<rect x="100" y="575" width="1" height="1" fill="#3a4450" />
<rect x="100" y="578" width="1" height="1" fill="#3a4450" />
<rect x="101" y="577" width="1" height="1" fill="#98a8bc" />
<rect x="101" y="579" width="1" height="1" fill="#2a3038" />
<rect x="102" y="575" width="1" height="1" fill="#2a3038" />
<rect x="103" y="576" width="1" height="1" fill="#5a6a80" />
<rect x="103" y="577" width="1" height="1" fill="#2a3038" />
<rect x="103" y="578" width="1" height="1" fill="#3a4450" />
<rect x="104" y="576" width="1" height="1" fill="#5a6a80" />
<rect x="104" y="578" width="1" height="1" fill="#5a6a80" />
<rect x="104" y="579" width="1" height="1" fill="#2a3038" />
<rect x="105" y="577" width="1" height="1" fill="#3a4450" />
<rect x="105" y="578" width="1" height="1" fill="#3a4450" />
<rect x="106" y="575" width="1" height="1" fill="#2a3038" />
<rect x="107" y="576" width="1" height="1" fill="#3a4450" />
<rect x="109" y="576" width="1" height="1" fill="#3a4450" />
<rect x="109" y="578" width="1" height="1" fill="#2a3038" />
<rect x="110" y="575" width="1" height="1" fill="#2a3038" />
<rect x="110" y="576" width="1" height="1" fill="#3a4450" />
<rect x="110" y="577" width="1" height="1" fill="#3a4450" />
<rect x="110" y="578" width="1" height="1" fill="#2a3038" />
<rect x="111" y="576" width="1" height="1" fill="#2a3038" />
<rect x="111" y="578" width="1" height="1" fill="#7a8aa0" />
<rect x="112" y="575" width="1" height="1" fill="#98a8bc" />
<rect x="112" y="577" width="1" height="1" fill="#7a8aa0" />
<rect x="112" y="578" width="1" height="1" fill="#98a8bc" />
<rect x="112" y="579" width="1" height="1" fill="#7a8aa0" />
<rect x="113" y="578" width="1" height="1" fill="#3a4450" />
<rect x="113" y="579" width="1" height="1" fill="#3a4450" />
<rect x="115" y="575" width="1" height="1" fill="#3a4450" />
<rect x="115" y="578" width="1" height="1" fill="#7a8aa0" />
<rect x="115" y="579" width="1" height="1" fill="#2a3038" />
<rect x="116" y="577" width="1" height="1" fill="#3a4450" />
<rect x="116" y="579" width="1" height="1" fill="#7a8aa0" />
<rect x="117" y="579" width="1" height="1" fill="#3a4450" />
<rect x="118" y="576" width="1" height="1" fill="#7a8aa0" />
<rect x="118" y="578" width="1" height="1" fill="#5a6a80" />
<rect x="118" y="579" width="1" height="1" fill="#5a6a80" />
<rect x="119" y="576" width="1" height="1" fill="#2a3038" />
<rect x="119" y="577" width="1" height="1" fill="#7a8aa0" />
<rect x="119" y="578" width="1" height="1" fill="#7a8aa0" />
<rect x="120" y="575" width="1" height="1" fill="#98a8bc" />
<rect x="121" y="575" width="1" height="1" fill="#5a6a80" />
<rect x="121" y="578" width="1" height="1" fill="#2a3038" />
<rect x="121" y="579" width="1" height="1" fill="#2a3038" />
<rect x="122" y="576" width="1" height="1" fill="#2a3038" />
<rect x="122" y="579" width="1" height="1" fill="#98a8bc" />
<rect x="123" y="575" width="1" height="1" fill="#3a4450" />
<rect x="123" y="576" width="1" height="1" fill="#98a8bc" />
<rect x="123" y="579" width="1" height="1" fill="#7a8aa0" />
<rect x="124" y="576" width="1" height="1" fill="#98a8bc" />
<rect x="125" y="575" width="1" height="1" fill="#98a8bc" />
<rect x="125" y="576" width="1" height="1" fill="#98a8bc" />
<rect x="125" y="579" width="1" height="1" fill="#2a3038" />
<rect x="126" y="576" width="1" height="1" fill="#5a6a80" />
<rect x="126" y="577" width="1" height="1" fill="#5a6a80" />
<rect x="126" y="578" width="1" height="1" fill="#5a6a80" />
<rect x="126" y="579" width="1" height="1" fill="#3a4450" />
<rect x="127" y="578" width="1" height="1" fill="#7a8aa0" />
<rect x="127" y="579" width="1" height="1" fill="#5a6a80" />
<rect x="128" y="575" width="1" height="1" fill="#98a8bc" />
<rect x="128" y="579" width="1" height="1" fill="#3a4450" />
<rect x="129" y="575" width="1" height="1" fill="#7a8aa0" />
<rect x="129" y="577" width="1" height="1" fill="#5a6a80" />
<rect x="129" y="579" width="1" height="1" fill="#98a8bc" />
<rect x="130" y="575" width="1" height="1" fill="#98a8bc" />
<rect x="130" y="577" width="1" height="1" fill="#7a8aa0" />
<rect x="130" y="578" width="1" height="1" fill="#7a8aa0" />
<rect x="130" y="579" width="1" height="1" fill="#2a3038" />
<rect x="131" y="575" width="1" height="1" fill="#3a4450" />
<rect x="131" y="577" width="1" height="1" fill="#7a8aa0" />
<rect x="132" y="575" width="1" height="1" fill="#3a4450" />
<rect x="133" y="575" width="1" height="1" fill="#2a3038" />
<rect x="133" y="578" width="1" height="1" fill="#98a8bc" />
<rect x="133" y="579" width="1" height="1" fill="#98a8bc" />
<rect x="134" y="576" width="1" height="1" fill="#98a8bc" />
<rect x="134" y="577" width="1" height="1" fill="#98a8bc" />
<rect x="135" y="576" width="1" height="1" fill="#5a6a80" />
<rect x="135" y="579" width="1" height="1" fill="#2a3038" />
<rect x="136" y="576" width="1" height="1" fill="#5a6a80" />
<rect x="137" y="576" width="1" height="1" fill="#5a6a80" />
<rect x="137" y="577" width="1" height="1" fill="#7a8aa0" />
<rect x="137" y="578" width="1" height="1" fill="#98a8bc" />
<rect x="138" y="576" width="1" height="1" fill="#3a4450" />
<rect x="138" y="577" width="1" height="1" fill="#2a3038" />
<rect x="139" y="575" width="1" height="1" fill="#2a3038" />
<rect x="139" y="577" width="1" height="1" fill="#3a4450" />
<rect x="139" y="579" width="1" height="1" fill="#7a8aa0" />
<rect x="140" y="575" width="1" height="1" fill="#3a4450" />
<rect x="140" y="576" width="1" height="1" fill="#3a4450" />
<rect x="140" y="578" width="1" height="1" fill="#5a6a80" />
<rect x="141" y="576" width="1" height="1" fill="#2a3038" />
<rect x="141" y="577" width="1" height="1" fill="#3a4450" />
<rect x="142" y="576" width="1" height="1" fill="#98a8bc" />
<rect x="142" y="578" width="1" height="1" fill="#98a8bc" />
<rect x="142" y="579" width="1" height="1" fill="#98a8bc" />
<rect x="143" y="575" width="1" height="1" fill="#5a6a80" />
<rect x="143" y="576" width="1" height="1" fill="#7a8aa0" />
<rect x="143" y="578" width="1" height="1" fill="#2a3038" />
<rect x="144" y="576" width="1" height="1" fill="#3a4450" />
<rect x="144" y="579" width="1" height="1" fill="#3a4450" />
<rect x="146" y="575" width="1" height="1" fill="#3a4450" />
<rect x="146" y="576" width="1" height="1" fill="#7a8aa0" />
<rect x="147" y="575" width="1" height="1" fill="#2a3038" />
<rect x="147" y="576" width="1" height="1" fill="#2a3038" />
<rect x="147" y="577" width="1" height="1" fill="#3a4450" />
<rect x="148" y="576" width="1" height="1" fill="#2a3038" />
<rect x="148" y="577" width="1" height="1" fill="#3a4450" />
<rect x="148" y="578" width="1" height="1" fill="#3a4450" />
<rect x="149" y="576" width="1" height="1" fill="#7a8aa0" />
<rect x="150" y="579" width="1" height="1" fill="#3a4450" />
<rect x="151" y="576" width="1" height="1" fill="#5a6a80" />
<rect x="152" y="575" width="1" height="1" fill="#c08040" />
<rect x="152" y="576" width="1" height="1" fill="#705040" />
<rect x="152" y="577" width="1" height="1" fill="#c08040" />
<rect x="152" y="578" width="1" height="1" fill="#2e2a2a" />
<rect x="152" y="579" width="1" height="1" fill="#2e2a2a" />
<rect x="153" y="575" width="1" height="1" fill="#3e3a3a" />
<rect x="153" y="577" width="1" height="1" fill="#3e3a3a" />
<rect x="153" y="578" width="1" height="1" fill="#2e2a2a" />
<rect x="153" y="579" width="1" height="1" fill="#9a5a28" />
<rect x="154" y="575" width="1" height="1" fill="#3e3a3a" />
<rect x="154" y="576" width="1" height="1" fill="#3e3a3a" />
<rect x="154" y="577" width="1" height="1" fill="#705040" />
<rect x="154" y="579" width="1" height="1" fill="#9a5a28" />
<rect x="155" y="575" width="1" height="1" fill="#603820" />
<rect x="155" y="577" width="1" height="1" fill="#c08040" />
<rect x="155" y="578" width="1" height="1" fill="#2e2a2a" />
<rect x="155" y="579" width="1" height="1" fill="#9a5a28" />
<rect x="156" y="575" width="1" height="1" fill="#3e3a3a" />
<rect x="156" y="576" width="1" height="1" fill="#3e3a3a" />
<rect x="156" y="578" width="1" height="1" fill="#705040" />
<rect x="156" y="579" width="1" height="1" fill="#2e2a2a" />
<rect x="157" y="575" width="1" height="1" fill="#3e3a3a" />
<rect x="157" y="576" width="1" height="1" fill="#2e2a2a" />
<rect x="157" y="577" width="1" height="1" fill="#603820" />
<rect x="157" y="578" width="1" height="1" fill="#c08040" />
<rect x="157" y="579" width="1" height="1" fill="#c08040" />
<rect x="158" y="575" width="1" height="1" fill="#3e3a3a" />
<rect x="158" y="577" width="1" height="1" fill="#2e2a2a" />
<rect x="158" y="578" width="1" height="1" fill="#2e2a2a" />
<rect x="159" y="576" width="1" height="1" fill="#c08040" />
<rect x="159" y="577" width="1" height="1" fill="#9a5a28" />
<rect x="159" y="578" width="1" height="1" fill="#2e2a2a" />
<rect x="159" y="579" width="1" height="1" fill="#2e2a2a" />
<rect x="160" y="575" width="1" height="1" fill="#2e2a2a" />
<rect x="160" y="576" width="1" height="1" fill="#603820" />
<rect x="160" y="577" width="1" height="1" fill="#3e3a3a" />
<rect x="160" y="579" width="1" height="1" fill="#603820" />
<rect x="161" y="576" width="1" height="1" fill="#c08040" />
<rect x="161" y="577" width="1" height="1" fill="#9a5a28" />
<rect x="161" y="578" width="1" height="1" fill="#c08040" />
<rect x="162" y="575" width="1" height="1" fill="#705040" />
<rect x="162" y="577" width="1" height="1" fill="#2e2a2a" />
<rect x="162" y="579" width="1" height="1" fill="#2e2a2a" />
<rect x="163" y="575" width="1" height="1" fill="#603820" />
<rect x="163" y="576" width="1" height="1" fill="#3e3a3a" />
<rect x="163" y="578" width="1" height="1" fill="#2e2a2a" />
<rect x="163" y="579" width="1" height="1" fill="#2e2a2a" />
<rect x="164" y="575" width="1" height="1" fill="#705040" />
<rect x="164" y="576" width="1" height="1" fill="#705040" />
<rect x="164" y="577" width="1" height="1" fill="#3e3a3a" />
<rect x="165" y="575" width="1" height="1" fill="#705040" />
<rect x="165" y="576" width="1" height="1" fill="#3e3a3a" />
<rect x="165" y="577" width="1" height="1" fill="#c08040" />
<rect x="165" y="578" width="1" height="1" fill="#2e2a2a" />
<rect x="165" y="579" width="1" height="1" fill="#2e2a2a" />
<rect x="166" y="575" width="1" height="1" fill="#2e2a2a" />
<rect x="166" y="576" width="1" height="1" fill="#3e3a3a" />
<rect x="166" y="577" width="1" height="1" fill="#3e3a3a" />
<rect x="166" y="579" width="1" height="1" fill="#9a5a28" />
<rect x="167" y="576" width="1" height="1" fill="#2e2a2a" />
<rect x="167" y="577" width="1" height="1" fill="#2e2a2a" />
<rect x="167" y="578" width="1" height="1" fill="#2e2a2a" />
<rect x="167" y="579" width="1" height="1" fill="#3e3a3a" />
<rect x="168" y="576" width="1" height="1" fill="#2e2a2a" />
<rect x="168" y="577" width="1" height="1" fill="#2e2a2a" />
<rect x="168" y="578" width="1" height="1" fill="#705040" />
<rect x="168" y="579" width="1" height="1" fill="#705040" />
<rect x="169" y="575" width="1" height="1" fill="#2e2a2a" />
<rect x="169" y="576" width="1" height="1" fill="#2e2a2a" />
<rect x="169" y="577" width="1" height="1" fill="#c08040" />
<rect x="169" y="578" width="1" height="1" fill="#705040" />
<rect x="169" y="579" width="1" height="1" fill="#2e2a2a" />
<rect x="170" y="575" width="1" height="1" fill="#705040" />
<rect x="170" y="577" width="1" height="1" fill="#705040" />
<rect x="170" y="578" width="1" height="1" fill="#3e3a3a" />
<rect x="170" y="579" width="1" height="1" fill="#2e2a2a" />
<rect x="171" y="576" width="1" height="1" fill="#2e2a2a" />
<rect x="171" y="577" width="1" height="1" fill="#9a5a28" />
<rect x="171" y="578" width="1" height="1" fill="#2e2a2a" />
<rect x="171" y="579" width="1" height="1" fill="#2e2a2a" />
<rect x="172" y="576" width="1" height="1" fill="#3e3a3a" />
<rect x="172" y="579" width="1" height="1" fill="#c08040" />
<rect x="173" y="575" width="1" height="1" fill="#2e2a2a" />
<rect x="173" y="576" width="1" height="1" fill="#2e2a2a" />
<rect x="173" y="577" width="1" height="1" fill="#3e3a3a" />
<rect x="173" y="579" width="1" height="1" fill="#705040" />
<rect x="174" y="576" width="1" height="1" fill="#603820" />
<rect x="174" y="577" width="1" height="1" fill="#c08040" />
<rect x="174" y="578" width="1" height="1" fill="#3e3a3a" />
<rect x="174" y="579" width="1" height="1" fill="#705040" />
<rect x="175" y="576" width="1" height="1" fill="#3e3a3a" />
<rect x="175" y="578" width="1" height="1" fill="#3e3a3a" />
<rect x="175" y="579" width="1" height="1" fill="#705040" />
<rect x="176" y="575" width="1" height="1" fill="#2e2a2a" />
<rect x="176" y="576" width="1" height="1" fill="#3e3a3a" />
<rect x="176" y="578" width="1" height="1" fill="#2e2a2a" />
<rect x="176" y="579" width="1" height="1" fill="#3e3a3a" />
<rect x="177" y="575" width="1" height="1" fill="#2e2a2a" />
<rect x="177" y="576" width="1" height="1" fill="#603820" />
<rect x="177" y="577" width="1" height="1" fill="#603820" />
<rect x="177" y="578" width="1" height="1" fill="#c08040" />
<rect x="177" y="579" width="1" height="1" fill="#2e2a2a" />
<rect x="178" y="575" width="1" height="1" fill="#603820" />
<rect x="178" y="577" width="1" height="1" fill="#3e3a3a" />
<rect x="178" y="578" width="1" height="1" fill="#2e2a2a" />
<rect x="178" y="579" width="1" height="1" fill="#2e2a2a" />
<rect x="179" y="575" width="1" height="1" fill="#2e2a2a" />
<rect x="179" y="576" width="1" height="1" fill="#c08040" />
<rect x="179" y="577" width="1" height="1" fill="#603820" />
<rect x="179" y="578" width="1" height="1" fill="#3e3a3a" />
<rect x="179" y="579" width="1" height="1" fill="#2e2a2a" />
<rect x="180" y="575" width="1" height="1" fill="#3e3a3a" />
<rect x="180" y="576" width="1" height="1" fill="#3e3a3a" />
<rect x="180" y="577" width="1" height="1" fill="#2e2a2a" />
<rect x="181" y="575" width="1" height="1" fill="#3e3a3a" />
<rect x="181" y="576" width="1" height="1" fill="#3e3a3a" />
<rect x="181" y="577" width="1" height="1" fill="#3e3a3a" />
<rect x="181" y="578" width="1" height="1" fill="#603820" />
<rect x="181" y="579" width="1" height="1" fill="#2e2a2a" />
<rect x="182" y="575" width="1" height="1" fill="#9a5a28" />
<rect x="182" y="576" width="1" height="1" fill="#3e3a3a" />
<rect x="182" y="577" width="1" height="1" fill="#3e3a3a" />
<rect x="182" y="578" width="1" height="1" fill="#2e2a2a" />
<rect x="183" y="575" width="1" height="1" fill="#603820" />
<rect x="183" y="576" width="1" height="1" fill="#3e3a3a" />
<rect x="183" y="577" width="1" height="1" fill="#603820" />
<rect x="183" y="578" width="1" height="1" fill="#705040" />
<rect x="183" y="579" width="1" height="1" fill="#705040" />
<rect x="184" y="575" width="1" height="1" fill="#705040" />
<rect x="184" y="577" width="1" height="1" fill="#603820" />
<rect x="184" y="578" width="1" height="1" fill="#705040" />
<rect x="184" y="579" width="1" height="1" fill="#c08040" />
<rect x="185" y="575" width="1" height="1" fill="#2e2a2a" />
<rect x="185" y="576" width="1" height="1" fill="#3e3a3a" />
<rect x="185" y="579" width="1" height="1" fill="#3e3a3a" />
<rect x="186" y="575" width="1" height="1" fill="#3e3a3a" />
<rect x="186" y="576" width="1" height="1" fill="#2e2a2a" />
<rect x="186" y="578" width="1" height="1" fill="#9a5a28" />
<rect x="187" y="575" width="1" height="1" fill="#705040" />
<rect x="187" y="576" width="1" height="1" fill="#3e3a3a" />
<rect x="187" y="577" width="1" height="1" fill="#3e3a3a" />
<rect x="187" y="579" width="1" height="1" fill="#9a5a28" />
<rect x="188" y="575" width="1" height="1" fill="#3e3a3a" />
<rect x="188" y="576" width="1" height="1" fill="#3e3a3a" />
<rect x="188" y="579" width="1" height="1" fill="#3e3a3a" />
<rect x="189" y="575" width="1" height="1" fill="#3e3a3a" />
<rect x="189" y="576" width="1" height="1" fill="#c08040" />
<rect x="189" y="578" width="1" height="1" fill="#3e3a3a" />
<rect x="189" y="579" width="1" height="1" fill="#2e2a2a" />
<rect x="190" y="575" width="1" height="1" fill="#705040" />
<rect x="190" y="577" width="1" height="1" fill="#3e3a3a" />
<rect x="190" y="578" width="1" height="1" fill="#c08040" />
<rect x="190" y="579" width="1" height="1" fill="#3e3a3a" />
<rect x="191" y="575" width="1" height="1" fill="#3a4450" />
<rect x="191" y="577" width="1" height="1" fill="#5a6a80" />
<rect x="191" y="578" width="1" height="1" fill="#7a8aa0" />
<rect x="191" y="579" width="1" height="1" fill="#2a3038" />
<rect x="192" y="575" width="1" height="1" fill="#2a3038" />
<rect x="192" y="578" width="1" height="1" fill="#5a6a80" />
<rect x="194" y="576" width="1" height="1" fill="#3a4450" />
<rect x="194" y="577" width="1" height="1" fill="#7a8aa0" />
<rect x="194" y="578" width="1" height="1" fill="#2a3038" />
<rect x="195" y="578" width="1" height="1" fill="#5a6a80" />
<rect x="196" y="576" width="1" height="1" fill="#3a4450" />
<rect x="196" y="577" width="1" height="1" fill="#3a4450" />
<rect x="196" y="578" width="1" height="1" fill="#2a3038" />
<rect x="196" y="579" width="1" height="1" fill="#2a3038" />
<rect x="198" y="576" width="1" height="1" fill="#3a4450" />
<rect x="198" y="579" width="1" height="1" fill="#5a6a80" />
<rect x="199" y="577" width="1" height="1" fill="#98a8bc" />
<rect x="199" y="578" width="1" height="1" fill="#3a4450" />
<rect x="199" y="579" width="1" height="1" fill="#3a4450" />
<rect x="200" y="575" width="1" height="1" fill="#3a4450" />
<rect x="200" y="576" width="1" height="1" fill="#7a8aa0" />
<rect x="201" y="575" width="1" height="1" fill="#2a3038" />
<rect x="201" y="579" width="1" height="1" fill="#98a8bc" />
<rect x="202" y="576" width="1" height="1" fill="#2a3038" />
<rect x="203" y="577" width="1" height="1" fill="#3a4450" />
<rect x="203" y="578" width="1" height="1" fill="#3a4450" />
<rect x="203" y="579" width="1" height="1" fill="#2a3038" />
<rect x="204" y="575" width="1" height="1" fill="#5a6a80" />
<rect x="204" y="578" width="1" height="1" fill="#98a8bc" />
<rect x="205" y="576" width="1" height="1" fill="#98a8bc" />
<rect x="206" y="575" width="1" height="1" fill="#7a8aa0" />
<rect x="206" y="576" width="1" height="1" fill="#3a4450" />
<rect x="206" y="577" width="1" height="1" fill="#3a4450" />
<rect x="207" y="575" width="1" height="1" fill="#2a3038" />
<rect x="207" y="578" width="1" height="1" fill="#7a8aa0" />
<rect x="208" y="578" width="1" height="1" fill="#2a3038" />
<rect x="208" y="579" width="1" height="1" fill="#2a3038" />
<rect x="209" y="575" width="1" height="1" fill="#2a3038" />
<rect x="209" y="576" width="1" height="1" fill="#3a4450" />
<rect x="209" y="577" width="1" height="1" fill="#2a3038" />
<rect x="209" y="578" width="1" height="1" fill="#7a8aa0" />
<rect x="209" y="579" width="1" height="1" fill="#3a4450" />
<rect x="210" y="576" width="1" height="1" fill="#7a8aa0" />
<rect x="210" y="578" width="1" height="1" fill="#2a3038" />
<rect x="210" y="579" width="1" height="1" fill="#98a8bc" />
<rect x="211" y="577" width="1" height="1" fill="#98a8bc" />
<rect x="211" y="579" width="1" height="1" fill="#3a4450" />
<rect x="212" y="576" width="1" height="1" fill="#5a6a80" />
<rect x="212" y="579" width="1" height="1" fill="#3a4450" />
<rect x="213" y="577" width="1" height="1" fill="#2a3038" />
<rect x="213" y="578" width="1" height="1" fill="#7a8aa0" />
<rect x="214" y="577" width="1" height="1" fill="#2a3038" />
<rect x="214" y="579" width="1" height="1" fill="#3a4450" />
<rect x="215" y="575" width="1" height="1" fill="#7a8aa0" />
<rect x="215" y="576" width="1" height="1" fill="#98a8bc" />
<rect x="215" y="577" width="1" height="1" fill="#5a6a80" />
<rect x="215" y="578" width="1" height="1" fill="#2a3038" />
<rect x="216" y="576" width="1" height="1" fill="#2a3038" />
<rect x="217" y="575" width="1" height="1" fill="#2a3038" />
<rect x="217" y="576" width="1" height="1" fill="#7a8aa0" />
<rect x="217" y="577" width="1" height="1" fill="#3a4450" />
<rect x="218" y="575" width="1" height="1" fill="#3a4450" />
<rect x="218" y="577" width="1" height="1" fill="#3a4450" />
<rect x="218" y="578" width="1" height="1" fill="#3a4450" />
<rect x="219" y="575" width="1" height="1" fill="#2a3038" />
<rect x="219" y="577" width="1" height="1" fill="#5a6a80" />
<rect x="219" y="578" width="1" height="1" fill="#98a8bc" />
<rect x="220" y="575" width="1" height="1" fill="#7a8aa0" />
<rect x="220" y="576" width="1" height="1" fill="#98a8bc" />
<rect x="220" y="577" width="1" height="1" fill="#3a4450" />
<rect x="220" y="578" width="1" height="1" fill="#98a8bc" />
<rect x="221" y="575" width="1" height="1" fill="#3a4450" />
<rect x="221" y="579" width="1" height="1" fill="#7a8aa0" />
<rect x="222" y="575" width="1" height="1" fill="#2a3038" />
<rect x="222" y="577" width="1" height="1" fill="#3a4450" />
<rect x="222" y="579" width="1" height="1" fill="#98a8bc" />
<rect x="223" y="578" width="1" height="1" fill="#98a8bc" />
<rect x="224" y="575" width="1" height="1" fill="#2a3038" />
<rect x="224" y="578" width="1" height="1" fill="#5a6a80" />
<rect x="225" y="574" width="373" height="1" fill="#303030" />
<rect x="225" y="575" width="1" height="5" fill="#ffffff" />
<rect x="226" y="575" width="1" height="5" fill="#c8d5e6" />
<rect x="227" y="575" width="371" height="5" fill="#f0f0f0" />
<rect x="369" y="575" width="1" height="2" fill="#606060" />
<rect x="511" y="575" width="1" height="2" fill="#606060" />
<rect x="599" y="0" width="743" height="14" fill="#c8d5e6" />
<rect x="602" y="14" width="740" height="545" fill="#f0f0f0" />
<text transform="translate(624.02 8) scale(0.9990 1)" font-size="12.3" fill="#323a46" stroke="#323a46" stroke-width="0">Графики</text>
<path d="M604.8 0 L608.8 0 L608.6 5.2 L612.6 0 L615.2 0 L608.6 9.8 L607 9.8 Z" fill="#e23a0c" stroke="none" stroke-width="1" shape-rendering="auto"/>
<text transform="translate(643.6 46.97) rotate(-90) scale(0.9842 1)" font-size="11" fill="#000" stroke="#000" stroke-width="0.15">DF</text>
<line x1="755.5" y1="17" x2="755.5" y2="59" stroke="#6e6e6e" stroke-width="1" stroke-dasharray="3 3"/>
<line x1="829.5" y1="17" x2="829.5" y2="59" stroke="#6e6e6e" stroke-width="1" stroke-dasharray="3 3"/>
<line x1="903.5" y1="17" x2="903.5" y2="59" stroke="#6e6e6e" stroke-width="1" stroke-dasharray="3 3"/>
<line x1="977.5" y1="17" x2="977.5" y2="59" stroke="#6e6e6e" stroke-width="1" stroke-dasharray="3 3"/>
<line x1="1051.5" y1="17" x2="1051.5" y2="59" stroke="#6e6e6e" stroke-width="1" stroke-dasharray="3 3"/>
<line x1="1125.5" y1="17" x2="1125.5" y2="59" stroke="#6e6e6e" stroke-width="1" stroke-dasharray="3 3"/>
<line x1="1199.5" y1="17" x2="1199.5" y2="59" stroke="#6e6e6e" stroke-width="1" stroke-dasharray="3 3"/>
<line x1="1273.5" y1="17" x2="1273.5" y2="59" stroke="#6e6e6e" stroke-width="1" stroke-dasharray="3 3"/>
<rect x="685" y="16" width="657" height="1" fill="#ffffff" />
<rect x="685" y="16" width="1" height="45" fill="#ffffff" />
<rect x="685" y="60" width="657" height="1" fill="#ffffff" />
<rect x="686" y="17" width="656" height="1" fill="#000" />
<rect x="686" y="17" width="1" height="43" fill="#000" />
<rect x="687" y="17" width="1" height="43" fill="#000" />
<rect x="686" y="58" width="656" height="1" fill="#000" />
<rect x="686" y="59" width="656" height="1" fill="#000" />
<rect x="688" y="18" width="654" height="1" fill="#ffffff" />
<rect x="688" y="18" width="1" height="40" fill="#ffffff" />
<rect x="688" y="57" width="654" height="1" fill="#ffffff" />
<rect x="688" y="38" width="654" height="1" fill="#ff0000" />
<rect x="683" y="38" width="3" height="1" fill="#7a7a7a" />
<text transform="translate(675.00 42) scale(0.9091 1)" font-size="11" fill="#000" stroke="#000" stroke-width="0.15">0</text>
<text transform="translate(643.6 116.90) rotate(-90) scale(1.0264 1)" font-size="11" fill="#000" stroke="#000" stroke-width="0.15">DUI</text>
<line x1="755.5" y1="85" x2="755.5" y2="127" stroke="#6e6e6e" stroke-width="1" stroke-dasharray="3 3"/>
<line x1="829.5" y1="85" x2="829.5" y2="127" stroke="#6e6e6e" stroke-width="1" stroke-dasharray="3 3"/>
<line x1="903.5" y1="85" x2="903.5" y2="127" stroke="#6e6e6e" stroke-width="1" stroke-dasharray="3 3"/>
<line x1="977.5" y1="85" x2="977.5" y2="127" stroke="#6e6e6e" stroke-width="1" stroke-dasharray="3 3"/>
<line x1="1051.5" y1="85" x2="1051.5" y2="127" stroke="#6e6e6e" stroke-width="1" stroke-dasharray="3 3"/>
<line x1="1125.5" y1="85" x2="1125.5" y2="127" stroke="#6e6e6e" stroke-width="1" stroke-dasharray="3 3"/>
<line x1="1199.5" y1="85" x2="1199.5" y2="127" stroke="#6e6e6e" stroke-width="1" stroke-dasharray="3 3"/>
<line x1="1273.5" y1="85" x2="1273.5" y2="127" stroke="#6e6e6e" stroke-width="1" stroke-dasharray="3 3"/>
<text transform="translate(675.14 90) scale(0.7941 1)" font-size="11" fill="#000" stroke="#000" stroke-width="0.15">1</text>
<text transform="translate(675.45 131) scale(0.7955 1)" font-size="11" fill="#000" stroke="#000" stroke-width="0.15">0</text>
<rect x="683" y="85" width="3" height="1" fill="#7a7a7a" />
<rect x="685" y="96" width="1" height="1" fill="#7a7a7a" />
<rect x="685" y="106" width="1" height="1" fill="#7a7a7a" />
<rect x="685" y="116" width="1" height="1" fill="#7a7a7a" />
<rect x="683" y="127" width="3" height="1" fill="#7a7a7a" />
<text transform="translate(643.6 213.34) rotate(-90) scale(1.0694 1)" font-size="11" fill="#000" stroke="#000" stroke-width="0.15">DNO/DPKVI</text>
<line x1="755.5" y1="153" x2="755.5" y2="195" stroke="#6e6e6e" stroke-width="1" stroke-dasharray="3 3"/>
<line x1="829.5" y1="153" x2="829.5" y2="195" stroke="#6e6e6e" stroke-width="1" stroke-dasharray="3 3"/>
<line x1="903.5" y1="153" x2="903.5" y2="195" stroke="#6e6e6e" stroke-width="1" stroke-dasharray="3 3"/>
<line x1="977.5" y1="153" x2="977.5" y2="195" stroke="#6e6e6e" stroke-width="1" stroke-dasharray="3 3"/>
<line x1="1051.5" y1="153" x2="1051.5" y2="195" stroke="#6e6e6e" stroke-width="1" stroke-dasharray="3 3"/>
<line x1="1125.5" y1="153" x2="1125.5" y2="195" stroke="#6e6e6e" stroke-width="1" stroke-dasharray="3 3"/>
<line x1="1199.5" y1="153" x2="1199.5" y2="195" stroke="#6e6e6e" stroke-width="1" stroke-dasharray="3 3"/>
<line x1="1273.5" y1="153" x2="1273.5" y2="195" stroke="#6e6e6e" stroke-width="1" stroke-dasharray="3 3"/>
<text transform="translate(675.14 158) scale(0.7941 1)" font-size="11" fill="#000" stroke="#000" stroke-width="0.15">1</text>
<text transform="translate(675.45 199) scale(0.7955 1)" font-size="11" fill="#000" stroke="#000" stroke-width="0.15">0</text>
<rect x="683" y="153" width="3" height="1" fill="#7a7a7a" />
<rect x="685" y="164" width="1" height="1" fill="#7a7a7a" />
<rect x="685" y="174" width="1" height="1" fill="#7a7a7a" />
<rect x="685" y="184" width="1" height="1" fill="#7a7a7a" />
<rect x="683" y="195" width="3" height="1" fill="#7a7a7a" />
<text transform="translate(643.6 257.92) rotate(-90) scale(1.0430 1)" font-size="11" fill="#000" stroke="#000" stroke-width="0.15">OUT5</text>
<line x1="755.5" y1="221" x2="755.5" y2="263" stroke="#6e6e6e" stroke-width="1" stroke-dasharray="3 3"/>
<line x1="829.5" y1="221" x2="829.5" y2="263" stroke="#6e6e6e" stroke-width="1" stroke-dasharray="3 3"/>
<line x1="903.5" y1="221" x2="903.5" y2="263" stroke="#6e6e6e" stroke-width="1" stroke-dasharray="3 3"/>
<line x1="977.5" y1="221" x2="977.5" y2="263" stroke="#6e6e6e" stroke-width="1" stroke-dasharray="3 3"/>
<line x1="1051.5" y1="221" x2="1051.5" y2="263" stroke="#6e6e6e" stroke-width="1" stroke-dasharray="3 3"/>
<line x1="1125.5" y1="221" x2="1125.5" y2="263" stroke="#6e6e6e" stroke-width="1" stroke-dasharray="3 3"/>
<line x1="1199.5" y1="221" x2="1199.5" y2="263" stroke="#6e6e6e" stroke-width="1" stroke-dasharray="3 3"/>
<line x1="1273.5" y1="221" x2="1273.5" y2="263" stroke="#6e6e6e" stroke-width="1" stroke-dasharray="3 3"/>
<rect x="685" y="220" width="657" height="1" fill="#ffffff" />
<rect x="685" y="220" width="1" height="45" fill="#ffffff" />
<rect x="685" y="264" width="657" height="1" fill="#ffffff" />
<rect x="686" y="221" width="656" height="1" fill="#000" />
<rect x="686" y="221" width="1" height="43" fill="#000" />
<rect x="687" y="221" width="1" height="43" fill="#000" />
<rect x="686" y="262" width="656" height="1" fill="#000" />
<rect x="686" y="263" width="656" height="1" fill="#000" />
<rect x="688" y="222" width="654" height="1" fill="#ffffff" />
<rect x="688" y="222" width="1" height="40" fill="#ffffff" />
<rect x="688" y="261" width="654" height="1" fill="#ffffff" />
<rect x="688" y="242" width="654" height="1" fill="#ff0000" />
<rect x="683" y="242" width="3" height="1" fill="#7a7a7a" />
<text transform="translate(675.00 246) scale(0.9091 1)" font-size="11" fill="#000" stroke="#000" stroke-width="0.15">0</text>
<text transform="translate(643.6 325.19) rotate(-90) scale(0.9968 1)" font-size="11" fill="#000" stroke="#000" stroke-width="0.15">OUT4</text>
<line x1="755.5" y1="289" x2="755.5" y2="331" stroke="#6e6e6e" stroke-width="1" stroke-dasharray="3 3"/>
<line x1="829.5" y1="289" x2="829.5" y2="331" stroke="#6e6e6e" stroke-width="1" stroke-dasharray="3 3"/>
<line x1="903.5" y1="289" x2="903.5" y2="331" stroke="#6e6e6e" stroke-width="1" stroke-dasharray="3 3"/>
<line x1="977.5" y1="289" x2="977.5" y2="331" stroke="#6e6e6e" stroke-width="1" stroke-dasharray="3 3"/>
<line x1="1051.5" y1="289" x2="1051.5" y2="331" stroke="#6e6e6e" stroke-width="1" stroke-dasharray="3 3"/>
<line x1="1125.5" y1="289" x2="1125.5" y2="331" stroke="#6e6e6e" stroke-width="1" stroke-dasharray="3 3"/>
<line x1="1199.5" y1="289" x2="1199.5" y2="331" stroke="#6e6e6e" stroke-width="1" stroke-dasharray="3 3"/>
<line x1="1273.5" y1="289" x2="1273.5" y2="331" stroke="#6e6e6e" stroke-width="1" stroke-dasharray="3 3"/>
<rect x="685" y="288" width="657" height="1" fill="#ffffff" />
<rect x="685" y="288" width="1" height="45" fill="#ffffff" />
<rect x="685" y="332" width="657" height="1" fill="#ffffff" />
<rect x="686" y="289" width="656" height="1" fill="#000" />
<rect x="686" y="289" width="1" height="43" fill="#000" />
<rect x="687" y="289" width="1" height="43" fill="#000" />
<rect x="686" y="330" width="656" height="1" fill="#000" />
<rect x="686" y="331" width="656" height="1" fill="#000" />
<rect x="688" y="290" width="654" height="1" fill="#ffffff" />
<rect x="688" y="290" width="1" height="40" fill="#ffffff" />
<rect x="688" y="329" width="654" height="1" fill="#ffffff" />
<rect x="688" y="310" width="654" height="1" fill="#ff0000" />
<rect x="683" y="310" width="3" height="1" fill="#7a7a7a" />
<text transform="translate(675.00 314) scale(0.9091 1)" font-size="11" fill="#000" stroke="#000" stroke-width="0.15">0</text>
<text transform="translate(643.6 393.20) rotate(-90) scale(1.0007 1)" font-size="11" fill="#000" stroke="#000" stroke-width="0.15">OUT3</text>
<line x1="755.5" y1="357" x2="755.5" y2="399" stroke="#6e6e6e" stroke-width="1" stroke-dasharray="3 3"/>
<line x1="829.5" y1="357" x2="829.5" y2="399" stroke="#6e6e6e" stroke-width="1" stroke-dasharray="3 3"/>
<line x1="903.5" y1="357" x2="903.5" y2="399" stroke="#6e6e6e" stroke-width="1" stroke-dasharray="3 3"/>
<line x1="977.5" y1="357" x2="977.5" y2="399" stroke="#6e6e6e" stroke-width="1" stroke-dasharray="3 3"/>
<line x1="1051.5" y1="357" x2="1051.5" y2="399" stroke="#6e6e6e" stroke-width="1" stroke-dasharray="3 3"/>
<line x1="1125.5" y1="357" x2="1125.5" y2="399" stroke="#6e6e6e" stroke-width="1" stroke-dasharray="3 3"/>
<line x1="1199.5" y1="357" x2="1199.5" y2="399" stroke="#6e6e6e" stroke-width="1" stroke-dasharray="3 3"/>
<line x1="1273.5" y1="357" x2="1273.5" y2="399" stroke="#6e6e6e" stroke-width="1" stroke-dasharray="3 3"/>
<rect x="685" y="356" width="657" height="1" fill="#ffffff" />
<rect x="685" y="356" width="1" height="45" fill="#ffffff" />
<rect x="685" y="400" width="657" height="1" fill="#ffffff" />
<rect x="686" y="357" width="656" height="1" fill="#000" />
<rect x="686" y="357" width="1" height="43" fill="#000" />
<rect x="687" y="357" width="1" height="43" fill="#000" />
<rect x="686" y="398" width="656" height="1" fill="#000" />
<rect x="686" y="399" width="656" height="1" fill="#000" />
<rect x="688" y="358" width="654" height="1" fill="#ffffff" />
<rect x="688" y="358" width="1" height="40" fill="#ffffff" />
<rect x="688" y="397" width="654" height="1" fill="#ffffff" />
<rect x="688" y="378" width="654" height="1" fill="#ff0000" />
<rect x="683" y="378" width="3" height="1" fill="#7a7a7a" />
<text transform="translate(675.00 382) scale(0.9091 1)" font-size="11" fill="#000" stroke="#000" stroke-width="0.15">0</text>
<text transform="translate(643.6 461.20) rotate(-90) scale(1.0046 1)" font-size="11" fill="#000" stroke="#000" stroke-width="0.15">OUT2</text>
<line x1="755.5" y1="425" x2="755.5" y2="467" stroke="#6e6e6e" stroke-width="1" stroke-dasharray="3 3"/>
<line x1="829.5" y1="425" x2="829.5" y2="467" stroke="#6e6e6e" stroke-width="1" stroke-dasharray="3 3"/>
<line x1="903.5" y1="425" x2="903.5" y2="467" stroke="#6e6e6e" stroke-width="1" stroke-dasharray="3 3"/>
<line x1="977.5" y1="425" x2="977.5" y2="467" stroke="#6e6e6e" stroke-width="1" stroke-dasharray="3 3"/>
<line x1="1051.5" y1="425" x2="1051.5" y2="467" stroke="#6e6e6e" stroke-width="1" stroke-dasharray="3 3"/>
<line x1="1125.5" y1="425" x2="1125.5" y2="467" stroke="#6e6e6e" stroke-width="1" stroke-dasharray="3 3"/>
<line x1="1199.5" y1="425" x2="1199.5" y2="467" stroke="#6e6e6e" stroke-width="1" stroke-dasharray="3 3"/>
<line x1="1273.5" y1="425" x2="1273.5" y2="467" stroke="#6e6e6e" stroke-width="1" stroke-dasharray="3 3"/>
<text transform="translate(675.14 430) scale(0.7941 1)" font-size="11" fill="#000" stroke="#000" stroke-width="0.15">1</text>
<text transform="translate(675.45 471) scale(0.7955 1)" font-size="11" fill="#000" stroke="#000" stroke-width="0.15">0</text>
<rect x="683" y="425" width="3" height="1" fill="#7a7a7a" />
<rect x="685" y="436" width="1" height="1" fill="#7a7a7a" />
<rect x="685" y="446" width="1" height="1" fill="#7a7a7a" />
<rect x="685" y="456" width="1" height="1" fill="#7a7a7a" />
<rect x="683" y="467" width="3" height="1" fill="#7a7a7a" />
<text transform="translate(643.6 529.20) rotate(-90) scale(1.0026 1)" font-size="11" fill="#000" stroke="#000" stroke-width="0.15">OUT1</text>
<line x1="755.5" y1="493" x2="755.5" y2="535" stroke="#6e6e6e" stroke-width="1" stroke-dasharray="3 3"/>
<line x1="829.5" y1="493" x2="829.5" y2="535" stroke="#6e6e6e" stroke-width="1" stroke-dasharray="3 3"/>
<line x1="903.5" y1="493" x2="903.5" y2="535" stroke="#6e6e6e" stroke-width="1" stroke-dasharray="3 3"/>
<line x1="977.5" y1="493" x2="977.5" y2="535" stroke="#6e6e6e" stroke-width="1" stroke-dasharray="3 3"/>
<line x1="1051.5" y1="493" x2="1051.5" y2="535" stroke="#6e6e6e" stroke-width="1" stroke-dasharray="3 3"/>
<line x1="1125.5" y1="493" x2="1125.5" y2="535" stroke="#6e6e6e" stroke-width="1" stroke-dasharray="3 3"/>
<line x1="1199.5" y1="493" x2="1199.5" y2="535" stroke="#6e6e6e" stroke-width="1" stroke-dasharray="3 3"/>
<line x1="1273.5" y1="493" x2="1273.5" y2="535" stroke="#6e6e6e" stroke-width="1" stroke-dasharray="3 3"/>
<text transform="translate(675.14 498) scale(0.7941 1)" font-size="11" fill="#000" stroke="#000" stroke-width="0.15">1</text>
<text transform="translate(675.45 539) scale(0.7955 1)" font-size="11" fill="#000" stroke="#000" stroke-width="0.15">0</text>
<rect x="683" y="493" width="3" height="1" fill="#7a7a7a" />
<rect x="685" y="504" width="1" height="1" fill="#7a7a7a" />
<rect x="685" y="514" width="1" height="1" fill="#7a7a7a" />
<rect x="685" y="524" width="1" height="1" fill="#7a7a7a" />
<rect x="683" y="535" width="3" height="1" fill="#7a7a7a" />
<rect x="687" y="85" width="655" height="43" fill="#ff0000" />
<rect x="686" y="85" width="1" height="43" fill="#000" />
<rect x="685" y="86" width="1" height="41" fill="#ffffff" />
<rect x="687" y="84" width="655" height="1" fill="#f4ffff" />
<rect x="683" y="152" width="659" height="1" fill="#ffffff" />
<rect x="683" y="154" width="659" height="1" fill="#ffffff" />
<rect x="683" y="153" width="659" height="1" fill="#a0a0a0" />
<line x1="683" y1="153.5" x2="1342" y2="153.5" stroke="#000" stroke-width="1" stroke-dasharray="3 3" stroke-dashoffset="-1"/>
<rect x="683" y="153" width="7" height="1" fill="#8a8a8a" />
<rect x="685" y="154" width="1" height="41" fill="#ffffff" />
<rect x="688" y="154" width="1" height="40" fill="#ffffff" />
<rect x="686" y="154" width="1" height="41" fill="#000" />
<rect x="687" y="154" width="1" height="41" fill="#000" />
<rect x="686" y="194" width="656" height="1" fill="#000" />
<rect x="688" y="195" width="654" height="1" fill="#a0a0a0" />
<rect x="683" y="196" width="659" height="1" fill="#ffffff" />
<line x1="686" y1="195.5" x2="1342" y2="195.5" stroke="#000" stroke-width="1" stroke-dasharray="3 3" stroke-dashoffset="-1"/>
<path d="M688.5 195.5 L762.5 195.5 L762.5 153.5 L765.5 153.5 L765.5 195.5 L855.5 195.5 L855.5 174.5 L856.5 174.5 L856.5 153.5 L859.5 153.5 L859.5 195.5 L954.5 195.5 L954.5 153.5 L957.5 153.5 L957.5 195.5 L1073.5 195.5 L1073.5 153.5 L1078.5 153.5 L1078.5 195.5 L1224.5 195.5 L1224.5 174.5 L1225.5 174.5 L1225.5 153.5 L1229.5 153.5 L1229.5 195.5 L1341.5 195.5" fill="none" stroke="#ff0000" stroke-width="1" stroke-linecap="square" shape-rendering="crispEdges"/>
<rect x="683" y="424" width="659" height="1" fill="#ffffff" />
<rect x="683" y="426" width="659" height="1" fill="#ffffff" />
<rect x="683" y="425" width="659" height="1" fill="#a0a0a0" />
<line x1="683" y1="425.5" x2="1342" y2="425.5" stroke="#000" stroke-width="1" stroke-dasharray="3 3" stroke-dashoffset="-1"/>
<rect x="683" y="425" width="7" height="1" fill="#8a8a8a" />
<rect x="685" y="426" width="1" height="41" fill="#ffffff" />
<rect x="688" y="426" width="1" height="40" fill="#ffffff" />
<rect x="686" y="426" width="1" height="41" fill="#000" />
<rect x="687" y="426" width="1" height="41" fill="#000" />
<rect x="686" y="466" width="656" height="1" fill="#000" />
<rect x="688" y="467" width="654" height="1" fill="#a0a0a0" />
<rect x="683" y="468" width="659" height="1" fill="#ffffff" />
<line x1="686" y1="467.5" x2="1342" y2="467.5" stroke="#000" stroke-width="1" stroke-dasharray="3 3" stroke-dashoffset="-1"/>
<path d="M688.5 425.5 L733.5 425.5 L733.5 467.5 L750.5 467.5 L750.5 425.5 L828.5 425.5 L828.5 467.5 L844.5 467.5 L844.5 425.5 L924.5 425.5 L924.5 467.5 L941.5 467.5 L941.5 425.5 L1035.5 425.5 L1035.5 467.5 L1056.5 467.5 L1056.5 446.5 L1057.5 446.5 L1057.5 425.5 L1180.5 425.5 L1180.5 467.5 L1206.5 467.5 L1206.5 425.5 L1314.5 425.5 L1314.5 446.5 L1315.5 446.5 L1315.5 467.5 L1333.5 467.5 L1333.5 425.5 L1341.5 425.5" fill="none" stroke="#ff0000" stroke-width="1" stroke-linecap="square" shape-rendering="crispEdges"/>
<rect x="683" y="492" width="659" height="1" fill="#ffffff" />
<rect x="683" y="494" width="659" height="1" fill="#ffffff" />
<rect x="683" y="493" width="659" height="1" fill="#a0a0a0" />
<line x1="683" y1="493.5" x2="1342" y2="493.5" stroke="#000" stroke-width="1" stroke-dasharray="3 3" stroke-dashoffset="-1"/>
<rect x="683" y="493" width="7" height="1" fill="#8a8a8a" />
<rect x="685" y="494" width="1" height="41" fill="#ffffff" />
<rect x="688" y="494" width="1" height="40" fill="#ffffff" />
<rect x="686" y="494" width="1" height="41" fill="#000" />
<rect x="687" y="494" width="1" height="41" fill="#000" />
<rect x="686" y="534" width="656" height="1" fill="#000" />
<rect x="688" y="535" width="654" height="1" fill="#a0a0a0" />
<rect x="683" y="536" width="659" height="1" fill="#ffffff" />
<line x1="686" y1="535.5" x2="1342" y2="535.5" stroke="#000" stroke-width="1" stroke-dasharray="3 3" stroke-dashoffset="-1"/>
<path d="M688.5 535.5 L697.5 535.5 L697.5 514.5 L698.5 514.5 L698.5 493.5 L782.5 493.5 L782.5 535.5 L797.5 535.5 L797.5 493.5 L875.5 493.5 L875.5 535.5 L891.5 535.5 L891.5 493.5 L977.5 493.5 L977.5 535.5 L995.5 535.5 L995.5 493.5 L1103.5 493.5 L1103.5 514.5 L1104.5 514.5 L1104.5 535.5 L1128.5 535.5 L1128.5 493.5 L1254.5 493.5 L1254.5 535.5 L1275.5 535.5 L1275.5 493.5 L1341.5 493.5" fill="none" stroke="#ff0000" stroke-width="1" stroke-linecap="square" shape-rendering="crispEdges"/>
<rect x="687" y="60" width="1" height="4" fill="#7a7a7a" />
<rect x="755" y="60" width="1" height="4" fill="#7a7a7a" />
<rect x="829" y="60" width="1" height="4" fill="#7a7a7a" />
<rect x="903" y="60" width="1" height="4" fill="#7a7a7a" />
<rect x="977" y="60" width="1" height="4" fill="#7a7a7a" />
<rect x="1051" y="60" width="1" height="4" fill="#7a7a7a" />
<rect x="1125" y="60" width="1" height="4" fill="#7a7a7a" />
<rect x="1199" y="60" width="1" height="4" fill="#7a7a7a" />
<rect x="1273" y="60" width="1" height="4" fill="#7a7a7a" />
<rect x="704" y="60" width="1" height="2" fill="#7a7a7a" />
<rect x="721" y="60" width="1" height="2" fill="#7a7a7a" />
<rect x="738" y="60" width="1" height="2" fill="#7a7a7a" />
<rect x="773" y="60" width="1" height="2" fill="#7a7a7a" />
<rect x="792" y="60" width="1" height="2" fill="#7a7a7a" />
<rect x="811" y="60" width="1" height="2" fill="#7a7a7a" />
<rect x="847" y="60" width="1" height="2" fill="#7a7a7a" />
<rect x="866" y="60" width="1" height="2" fill="#7a7a7a" />
<rect x="885" y="60" width="1" height="2" fill="#7a7a7a" />
<rect x="921" y="60" width="1" height="2" fill="#7a7a7a" />
<rect x="940" y="60" width="1" height="2" fill="#7a7a7a" />
<rect x="959" y="60" width="1" height="2" fill="#7a7a7a" />
<rect x="995" y="60" width="1" height="2" fill="#7a7a7a" />
<rect x="1014" y="60" width="1" height="2" fill="#7a7a7a" />
<rect x="1033" y="60" width="1" height="2" fill="#7a7a7a" />
<rect x="1069" y="60" width="1" height="2" fill="#7a7a7a" />
<rect x="1088" y="60" width="1" height="2" fill="#7a7a7a" />
<rect x="1107" y="60" width="1" height="2" fill="#7a7a7a" />
<rect x="1143" y="60" width="1" height="2" fill="#7a7a7a" />
<rect x="1162" y="60" width="1" height="2" fill="#7a7a7a" />
<rect x="1181" y="60" width="1" height="2" fill="#7a7a7a" />
<rect x="1217" y="60" width="1" height="2" fill="#7a7a7a" />
<rect x="1236" y="60" width="1" height="2" fill="#7a7a7a" />
<rect x="1255" y="60" width="1" height="2" fill="#7a7a7a" />
<rect x="1291" y="60" width="1" height="2" fill="#7a7a7a" />
<rect x="1310" y="60" width="1" height="2" fill="#7a7a7a" />
<rect x="1329" y="60" width="1" height="2" fill="#7a7a7a" />
<text transform="translate(655.52 76) scale(0.9690 1)" font-size="11" fill="#000" stroke="#000" stroke-width="0.15">00:00:13.064</text>
<text transform="translate(723.52 76) scale(0.9690 1)" font-size="11" fill="#000" stroke="#000" stroke-width="0.15">00:00:13.784</text>
<text transform="translate(797.52 76) scale(0.9706 1)" font-size="11" fill="#000" stroke="#000" stroke-width="0.15">00:00:14.573</text>
<text transform="translate(871.52 76) scale(0.9723 1)" font-size="11" fill="#000" stroke="#000" stroke-width="0.15">00:00:15.362</text>
<text transform="translate(945.52 76) scale(0.9715 1)" font-size="11" fill="#000" stroke="#000" stroke-width="0.15">00:00:16.151</text>
<text transform="translate(1019.52 76) scale(0.9698 1)" font-size="11" fill="#000" stroke="#000" stroke-width="0.15">00:00:16.940</text>
<text transform="translate(1093.52 76) scale(0.9715 1)" font-size="11" fill="#000" stroke="#000" stroke-width="0.15">00:00:17.729</text>
<text transform="translate(1167.52 76) scale(0.9706 1)" font-size="11" fill="#000" stroke="#000" stroke-width="0.15">00:00:18.518</text>
<text transform="translate(1241.52 76) scale(0.9723 1)" font-size="11" fill="#000" stroke="#000" stroke-width="0.15">00:00:19.307</text>
<text transform="translate(1315.52 76) scale(0.9706 1)" font-size="11" fill="#000" stroke="#000" stroke-width="0.15">00:00:20.096</text>
<rect x="687" y="128" width="1" height="4" fill="#7a7a7a" />
<rect x="755" y="128" width="1" height="4" fill="#7a7a7a" />
<rect x="829" y="128" width="1" height="4" fill="#7a7a7a" />
<rect x="903" y="128" width="1" height="4" fill="#7a7a7a" />
<rect x="977" y="128" width="1" height="4" fill="#7a7a7a" />
<rect x="1051" y="128" width="1" height="4" fill="#7a7a7a" />
<rect x="1125" y="128" width="1" height="4" fill="#7a7a7a" />
<rect x="1199" y="128" width="1" height="4" fill="#7a7a7a" />
<rect x="1273" y="128" width="1" height="4" fill="#7a7a7a" />
<rect x="704" y="128" width="1" height="2" fill="#7a7a7a" />
<rect x="721" y="128" width="1" height="2" fill="#7a7a7a" />
<rect x="738" y="128" width="1" height="2" fill="#7a7a7a" />
<rect x="773" y="128" width="1" height="2" fill="#7a7a7a" />
<rect x="792" y="128" width="1" height="2" fill="#7a7a7a" />
<rect x="811" y="128" width="1" height="2" fill="#7a7a7a" />
<rect x="847" y="128" width="1" height="2" fill="#7a7a7a" />
<rect x="866" y="128" width="1" height="2" fill="#7a7a7a" />
<rect x="885" y="128" width="1" height="2" fill="#7a7a7a" />
<rect x="921" y="128" width="1" height="2" fill="#7a7a7a" />
<rect x="940" y="128" width="1" height="2" fill="#7a7a7a" />
<rect x="959" y="128" width="1" height="2" fill="#7a7a7a" />
<rect x="995" y="128" width="1" height="2" fill="#7a7a7a" />
<rect x="1014" y="128" width="1" height="2" fill="#7a7a7a" />
<rect x="1033" y="128" width="1" height="2" fill="#7a7a7a" />
<rect x="1069" y="128" width="1" height="2" fill="#7a7a7a" />
<rect x="1088" y="128" width="1" height="2" fill="#7a7a7a" />
<rect x="1107" y="128" width="1" height="2" fill="#7a7a7a" />
<rect x="1143" y="128" width="1" height="2" fill="#7a7a7a" />
<rect x="1162" y="128" width="1" height="2" fill="#7a7a7a" />
<rect x="1181" y="128" width="1" height="2" fill="#7a7a7a" />
<rect x="1217" y="128" width="1" height="2" fill="#7a7a7a" />
<rect x="1236" y="128" width="1" height="2" fill="#7a7a7a" />
<rect x="1255" y="128" width="1" height="2" fill="#7a7a7a" />
<rect x="1291" y="128" width="1" height="2" fill="#7a7a7a" />
<rect x="1310" y="128" width="1" height="2" fill="#7a7a7a" />
<rect x="1329" y="128" width="1" height="2" fill="#7a7a7a" />
<text transform="translate(655.52 144) scale(0.9690 1)" font-size="11" fill="#000" stroke="#000" stroke-width="0.15">00:00:13.064</text>
<text transform="translate(723.52 144) scale(0.9690 1)" font-size="11" fill="#000" stroke="#000" stroke-width="0.15">00:00:13.784</text>
<text transform="translate(797.52 144) scale(0.9706 1)" font-size="11" fill="#000" stroke="#000" stroke-width="0.15">00:00:14.573</text>
<text transform="translate(871.52 144) scale(0.9723 1)" font-size="11" fill="#000" stroke="#000" stroke-width="0.15">00:00:15.362</text>
<text transform="translate(945.52 144) scale(0.9715 1)" font-size="11" fill="#000" stroke="#000" stroke-width="0.15">00:00:16.151</text>
<text transform="translate(1019.52 144) scale(0.9698 1)" font-size="11" fill="#000" stroke="#000" stroke-width="0.15">00:00:16.940</text>
<text transform="translate(1093.52 144) scale(0.9715 1)" font-size="11" fill="#000" stroke="#000" stroke-width="0.15">00:00:17.729</text>
<text transform="translate(1167.52 144) scale(0.9706 1)" font-size="11" fill="#000" stroke="#000" stroke-width="0.15">00:00:18.518</text>
<text transform="translate(1241.52 144) scale(0.9723 1)" font-size="11" fill="#000" stroke="#000" stroke-width="0.15">00:00:19.307</text>
<text transform="translate(1315.52 144) scale(0.9706 1)" font-size="11" fill="#000" stroke="#000" stroke-width="0.15">00:00:20.096</text>
<rect x="687" y="196" width="1" height="4" fill="#7a7a7a" />
<rect x="755" y="196" width="1" height="4" fill="#7a7a7a" />
<rect x="829" y="196" width="1" height="4" fill="#7a7a7a" />
<rect x="903" y="196" width="1" height="4" fill="#7a7a7a" />
<rect x="977" y="196" width="1" height="4" fill="#7a7a7a" />
<rect x="1051" y="196" width="1" height="4" fill="#7a7a7a" />
<rect x="1125" y="196" width="1" height="4" fill="#7a7a7a" />
<rect x="1199" y="196" width="1" height="4" fill="#7a7a7a" />
<rect x="1273" y="196" width="1" height="4" fill="#7a7a7a" />
<rect x="704" y="196" width="1" height="2" fill="#7a7a7a" />
<rect x="721" y="196" width="1" height="2" fill="#7a7a7a" />
<rect x="738" y="196" width="1" height="2" fill="#7a7a7a" />
<rect x="773" y="196" width="1" height="2" fill="#7a7a7a" />
<rect x="792" y="196" width="1" height="2" fill="#7a7a7a" />
<rect x="811" y="196" width="1" height="2" fill="#7a7a7a" />
<rect x="847" y="196" width="1" height="2" fill="#7a7a7a" />
<rect x="866" y="196" width="1" height="2" fill="#7a7a7a" />
<rect x="885" y="196" width="1" height="2" fill="#7a7a7a" />
<rect x="921" y="196" width="1" height="2" fill="#7a7a7a" />
<rect x="940" y="196" width="1" height="2" fill="#7a7a7a" />
<rect x="959" y="196" width="1" height="2" fill="#7a7a7a" />
<rect x="995" y="196" width="1" height="2" fill="#7a7a7a" />
<rect x="1014" y="196" width="1" height="2" fill="#7a7a7a" />
<rect x="1033" y="196" width="1" height="2" fill="#7a7a7a" />
<rect x="1069" y="196" width="1" height="2" fill="#7a7a7a" />
<rect x="1088" y="196" width="1" height="2" fill="#7a7a7a" />
<rect x="1107" y="196" width="1" height="2" fill="#7a7a7a" />
<rect x="1143" y="196" width="1" height="2" fill="#7a7a7a" />
<rect x="1162" y="196" width="1" height="2" fill="#7a7a7a" />
<rect x="1181" y="196" width="1" height="2" fill="#7a7a7a" />
<rect x="1217" y="196" width="1" height="2" fill="#7a7a7a" />
<rect x="1236" y="196" width="1" height="2" fill="#7a7a7a" />
<rect x="1255" y="196" width="1" height="2" fill="#7a7a7a" />
<rect x="1291" y="196" width="1" height="2" fill="#7a7a7a" />
<rect x="1310" y="196" width="1" height="2" fill="#7a7a7a" />
<rect x="1329" y="196" width="1" height="2" fill="#7a7a7a" />
<text transform="translate(655.52 212) scale(0.9690 1)" font-size="11" fill="#000" stroke="#000" stroke-width="0.15">00:00:13.064</text>
<text transform="translate(723.52 212) scale(0.9690 1)" font-size="11" fill="#000" stroke="#000" stroke-width="0.15">00:00:13.784</text>
<text transform="translate(797.52 212) scale(0.9706 1)" font-size="11" fill="#000" stroke="#000" stroke-width="0.15">00:00:14.573</text>
<text transform="translate(871.52 212) scale(0.9723 1)" font-size="11" fill="#000" stroke="#000" stroke-width="0.15">00:00:15.362</text>
<text transform="translate(945.52 212) scale(0.9715 1)" font-size="11" fill="#000" stroke="#000" stroke-width="0.15">00:00:16.151</text>
<text transform="translate(1019.52 212) scale(0.9698 1)" font-size="11" fill="#000" stroke="#000" stroke-width="0.15">00:00:16.940</text>
<text transform="translate(1093.52 212) scale(0.9715 1)" font-size="11" fill="#000" stroke="#000" stroke-width="0.15">00:00:17.729</text>
<text transform="translate(1167.52 212) scale(0.9706 1)" font-size="11" fill="#000" stroke="#000" stroke-width="0.15">00:00:18.518</text>
<text transform="translate(1241.52 212) scale(0.9723 1)" font-size="11" fill="#000" stroke="#000" stroke-width="0.15">00:00:19.307</text>
<text transform="translate(1315.52 212) scale(0.9706 1)" font-size="11" fill="#000" stroke="#000" stroke-width="0.15">00:00:20.096</text>
<rect x="687" y="264" width="1" height="4" fill="#7a7a7a" />
<rect x="755" y="264" width="1" height="4" fill="#7a7a7a" />
<rect x="829" y="264" width="1" height="4" fill="#7a7a7a" />
<rect x="903" y="264" width="1" height="4" fill="#7a7a7a" />
<rect x="977" y="264" width="1" height="4" fill="#7a7a7a" />
<rect x="1051" y="264" width="1" height="4" fill="#7a7a7a" />
<rect x="1125" y="264" width="1" height="4" fill="#7a7a7a" />
<rect x="1199" y="264" width="1" height="4" fill="#7a7a7a" />
<rect x="1273" y="264" width="1" height="4" fill="#7a7a7a" />
<rect x="704" y="264" width="1" height="2" fill="#7a7a7a" />
<rect x="721" y="264" width="1" height="2" fill="#7a7a7a" />
<rect x="738" y="264" width="1" height="2" fill="#7a7a7a" />
<rect x="773" y="264" width="1" height="2" fill="#7a7a7a" />
<rect x="792" y="264" width="1" height="2" fill="#7a7a7a" />
<rect x="811" y="264" width="1" height="2" fill="#7a7a7a" />
<rect x="847" y="264" width="1" height="2" fill="#7a7a7a" />
<rect x="866" y="264" width="1" height="2" fill="#7a7a7a" />
<rect x="885" y="264" width="1" height="2" fill="#7a7a7a" />
<rect x="921" y="264" width="1" height="2" fill="#7a7a7a" />
<rect x="940" y="264" width="1" height="2" fill="#7a7a7a" />
<rect x="959" y="264" width="1" height="2" fill="#7a7a7a" />
<rect x="995" y="264" width="1" height="2" fill="#7a7a7a" />
<rect x="1014" y="264" width="1" height="2" fill="#7a7a7a" />
<rect x="1033" y="264" width="1" height="2" fill="#7a7a7a" />
<rect x="1069" y="264" width="1" height="2" fill="#7a7a7a" />
<rect x="1088" y="264" width="1" height="2" fill="#7a7a7a" />
<rect x="1107" y="264" width="1" height="2" fill="#7a7a7a" />
<rect x="1143" y="264" width="1" height="2" fill="#7a7a7a" />
<rect x="1162" y="264" width="1" height="2" fill="#7a7a7a" />
<rect x="1181" y="264" width="1" height="2" fill="#7a7a7a" />
<rect x="1217" y="264" width="1" height="2" fill="#7a7a7a" />
<rect x="1236" y="264" width="1" height="2" fill="#7a7a7a" />
<rect x="1255" y="264" width="1" height="2" fill="#7a7a7a" />
<rect x="1291" y="264" width="1" height="2" fill="#7a7a7a" />
<rect x="1310" y="264" width="1" height="2" fill="#7a7a7a" />
<rect x="1329" y="264" width="1" height="2" fill="#7a7a7a" />
<text transform="translate(655.52 280) scale(0.9690 1)" font-size="11" fill="#000" stroke="#000" stroke-width="0.15">00:00:13.064</text>
<text transform="translate(723.52 280) scale(0.9690 1)" font-size="11" fill="#000" stroke="#000" stroke-width="0.15">00:00:13.784</text>
<text transform="translate(797.52 280) scale(0.9706 1)" font-size="11" fill="#000" stroke="#000" stroke-width="0.15">00:00:14.573</text>
<text transform="translate(871.52 280) scale(0.9723 1)" font-size="11" fill="#000" stroke="#000" stroke-width="0.15">00:00:15.362</text>
<text transform="translate(945.52 280) scale(0.9715 1)" font-size="11" fill="#000" stroke="#000" stroke-width="0.15">00:00:16.151</text>
<text transform="translate(1019.52 280) scale(0.9698 1)" font-size="11" fill="#000" stroke="#000" stroke-width="0.15">00:00:16.940</text>
<text transform="translate(1093.52 280) scale(0.9715 1)" font-size="11" fill="#000" stroke="#000" stroke-width="0.15">00:00:17.729</text>
<text transform="translate(1167.52 280) scale(0.9706 1)" font-size="11" fill="#000" stroke="#000" stroke-width="0.15">00:00:18.518</text>
<text transform="translate(1241.52 280) scale(0.9723 1)" font-size="11" fill="#000" stroke="#000" stroke-width="0.15">00:00:19.307</text>
<text transform="translate(1315.52 280) scale(0.9706 1)" font-size="11" fill="#000" stroke="#000" stroke-width="0.15">00:00:20.096</text>
<rect x="687" y="332" width="1" height="4" fill="#7a7a7a" />
<rect x="755" y="332" width="1" height="4" fill="#7a7a7a" />
<rect x="829" y="332" width="1" height="4" fill="#7a7a7a" />
<rect x="903" y="332" width="1" height="4" fill="#7a7a7a" />
<rect x="977" y="332" width="1" height="4" fill="#7a7a7a" />
<rect x="1051" y="332" width="1" height="4" fill="#7a7a7a" />
<rect x="1125" y="332" width="1" height="4" fill="#7a7a7a" />
<rect x="1199" y="332" width="1" height="4" fill="#7a7a7a" />
<rect x="1273" y="332" width="1" height="4" fill="#7a7a7a" />
<rect x="704" y="332" width="1" height="2" fill="#7a7a7a" />
<rect x="721" y="332" width="1" height="2" fill="#7a7a7a" />
<rect x="738" y="332" width="1" height="2" fill="#7a7a7a" />
<rect x="773" y="332" width="1" height="2" fill="#7a7a7a" />
<rect x="792" y="332" width="1" height="2" fill="#7a7a7a" />
<rect x="811" y="332" width="1" height="2" fill="#7a7a7a" />
<rect x="847" y="332" width="1" height="2" fill="#7a7a7a" />
<rect x="866" y="332" width="1" height="2" fill="#7a7a7a" />
<rect x="885" y="332" width="1" height="2" fill="#7a7a7a" />
<rect x="921" y="332" width="1" height="2" fill="#7a7a7a" />
<rect x="940" y="332" width="1" height="2" fill="#7a7a7a" />
<rect x="959" y="332" width="1" height="2" fill="#7a7a7a" />
<rect x="995" y="332" width="1" height="2" fill="#7a7a7a" />
<rect x="1014" y="332" width="1" height="2" fill="#7a7a7a" />
<rect x="1033" y="332" width="1" height="2" fill="#7a7a7a" />
<rect x="1069" y="332" width="1" height="2" fill="#7a7a7a" />
<rect x="1088" y="332" width="1" height="2" fill="#7a7a7a" />
<rect x="1107" y="332" width="1" height="2" fill="#7a7a7a" />
<rect x="1143" y="332" width="1" height="2" fill="#7a7a7a" />
<rect x="1162" y="332" width="1" height="2" fill="#7a7a7a" />
<rect x="1181" y="332" width="1" height="2" fill="#7a7a7a" />
<rect x="1217" y="332" width="1" height="2" fill="#7a7a7a" />
<rect x="1236" y="332" width="1" height="2" fill="#7a7a7a" />
<rect x="1255" y="332" width="1" height="2" fill="#7a7a7a" />
<rect x="1291" y="332" width="1" height="2" fill="#7a7a7a" />
<rect x="1310" y="332" width="1" height="2" fill="#7a7a7a" />
<rect x="1329" y="332" width="1" height="2" fill="#7a7a7a" />
<text transform="translate(655.52 348) scale(0.9690 1)" font-size="11" fill="#000" stroke="#000" stroke-width="0.15">00:00:13.064</text>
<text transform="translate(723.52 348) scale(0.9690 1)" font-size="11" fill="#000" stroke="#000" stroke-width="0.15">00:00:13.784</text>
<text transform="translate(797.52 348) scale(0.9706 1)" font-size="11" fill="#000" stroke="#000" stroke-width="0.15">00:00:14.573</text>
<text transform="translate(871.52 348) scale(0.9723 1)" font-size="11" fill="#000" stroke="#000" stroke-width="0.15">00:00:15.362</text>
<text transform="translate(945.52 348) scale(0.9715 1)" font-size="11" fill="#000" stroke="#000" stroke-width="0.15">00:00:16.151</text>
<text transform="translate(1019.52 348) scale(0.9698 1)" font-size="11" fill="#000" stroke="#000" stroke-width="0.15">00:00:16.940</text>
<text transform="translate(1093.52 348) scale(0.9715 1)" font-size="11" fill="#000" stroke="#000" stroke-width="0.15">00:00:17.729</text>
<text transform="translate(1167.52 348) scale(0.9706 1)" font-size="11" fill="#000" stroke="#000" stroke-width="0.15">00:00:18.518</text>
<text transform="translate(1241.52 348) scale(0.9723 1)" font-size="11" fill="#000" stroke="#000" stroke-width="0.15">00:00:19.307</text>
<text transform="translate(1315.52 348) scale(0.9706 1)" font-size="11" fill="#000" stroke="#000" stroke-width="0.15">00:00:20.096</text>
<rect x="687" y="400" width="1" height="4" fill="#7a7a7a" />
<rect x="755" y="400" width="1" height="4" fill="#7a7a7a" />
<rect x="829" y="400" width="1" height="4" fill="#7a7a7a" />
<rect x="903" y="400" width="1" height="4" fill="#7a7a7a" />
<rect x="977" y="400" width="1" height="4" fill="#7a7a7a" />
<rect x="1051" y="400" width="1" height="4" fill="#7a7a7a" />
<rect x="1125" y="400" width="1" height="4" fill="#7a7a7a" />
<rect x="1199" y="400" width="1" height="4" fill="#7a7a7a" />
<rect x="1273" y="400" width="1" height="4" fill="#7a7a7a" />
<rect x="704" y="400" width="1" height="2" fill="#7a7a7a" />
<rect x="721" y="400" width="1" height="2" fill="#7a7a7a" />
<rect x="738" y="400" width="1" height="2" fill="#7a7a7a" />
<rect x="773" y="400" width="1" height="2" fill="#7a7a7a" />
<rect x="792" y="400" width="1" height="2" fill="#7a7a7a" />
<rect x="811" y="400" width="1" height="2" fill="#7a7a7a" />
<rect x="847" y="400" width="1" height="2" fill="#7a7a7a" />
<rect x="866" y="400" width="1" height="2" fill="#7a7a7a" />
<rect x="885" y="400" width="1" height="2" fill="#7a7a7a" />
<rect x="921" y="400" width="1" height="2" fill="#7a7a7a" />
<rect x="940" y="400" width="1" height="2" fill="#7a7a7a" />
<rect x="959" y="400" width="1" height="2" fill="#7a7a7a" />
<rect x="995" y="400" width="1" height="2" fill="#7a7a7a" />
<rect x="1014" y="400" width="1" height="2" fill="#7a7a7a" />
<rect x="1033" y="400" width="1" height="2" fill="#7a7a7a" />
<rect x="1069" y="400" width="1" height="2" fill="#7a7a7a" />
<rect x="1088" y="400" width="1" height="2" fill="#7a7a7a" />
<rect x="1107" y="400" width="1" height="2" fill="#7a7a7a" />
<rect x="1143" y="400" width="1" height="2" fill="#7a7a7a" />
<rect x="1162" y="400" width="1" height="2" fill="#7a7a7a" />
<rect x="1181" y="400" width="1" height="2" fill="#7a7a7a" />
<rect x="1217" y="400" width="1" height="2" fill="#7a7a7a" />
<rect x="1236" y="400" width="1" height="2" fill="#7a7a7a" />
<rect x="1255" y="400" width="1" height="2" fill="#7a7a7a" />
<rect x="1291" y="400" width="1" height="2" fill="#7a7a7a" />
<rect x="1310" y="400" width="1" height="2" fill="#7a7a7a" />
<rect x="1329" y="400" width="1" height="2" fill="#7a7a7a" />
<text transform="translate(655.52 416) scale(0.9690 1)" font-size="11" fill="#000" stroke="#000" stroke-width="0.15">00:00:13.064</text>
<text transform="translate(723.52 416) scale(0.9690 1)" font-size="11" fill="#000" stroke="#000" stroke-width="0.15">00:00:13.784</text>
<text transform="translate(797.52 416) scale(0.9706 1)" font-size="11" fill="#000" stroke="#000" stroke-width="0.15">00:00:14.573</text>
<text transform="translate(871.52 416) scale(0.9723 1)" font-size="11" fill="#000" stroke="#000" stroke-width="0.15">00:00:15.362</text>
<text transform="translate(945.52 416) scale(0.9715 1)" font-size="11" fill="#000" stroke="#000" stroke-width="0.15">00:00:16.151</text>
<text transform="translate(1019.52 416) scale(0.9698 1)" font-size="11" fill="#000" stroke="#000" stroke-width="0.15">00:00:16.940</text>
<text transform="translate(1093.52 416) scale(0.9715 1)" font-size="11" fill="#000" stroke="#000" stroke-width="0.15">00:00:17.729</text>
<text transform="translate(1167.52 416) scale(0.9706 1)" font-size="11" fill="#000" stroke="#000" stroke-width="0.15">00:00:18.518</text>
<text transform="translate(1241.52 416) scale(0.9723 1)" font-size="11" fill="#000" stroke="#000" stroke-width="0.15">00:00:19.307</text>
<text transform="translate(1315.52 416) scale(0.9706 1)" font-size="11" fill="#000" stroke="#000" stroke-width="0.15">00:00:20.096</text>
<rect x="687" y="468" width="1" height="4" fill="#7a7a7a" />
<rect x="755" y="468" width="1" height="4" fill="#7a7a7a" />
<rect x="829" y="468" width="1" height="4" fill="#7a7a7a" />
<rect x="903" y="468" width="1" height="4" fill="#7a7a7a" />
<rect x="977" y="468" width="1" height="4" fill="#7a7a7a" />
<rect x="1051" y="468" width="1" height="4" fill="#7a7a7a" />
<rect x="1125" y="468" width="1" height="4" fill="#7a7a7a" />
<rect x="1199" y="468" width="1" height="4" fill="#7a7a7a" />
<rect x="1273" y="468" width="1" height="4" fill="#7a7a7a" />
<rect x="704" y="468" width="1" height="2" fill="#7a7a7a" />
<rect x="721" y="468" width="1" height="2" fill="#7a7a7a" />
<rect x="738" y="468" width="1" height="2" fill="#7a7a7a" />
<rect x="773" y="468" width="1" height="2" fill="#7a7a7a" />
<rect x="792" y="468" width="1" height="2" fill="#7a7a7a" />
<rect x="811" y="468" width="1" height="2" fill="#7a7a7a" />
<rect x="847" y="468" width="1" height="2" fill="#7a7a7a" />
<rect x="866" y="468" width="1" height="2" fill="#7a7a7a" />
<rect x="885" y="468" width="1" height="2" fill="#7a7a7a" />
<rect x="921" y="468" width="1" height="2" fill="#7a7a7a" />
<rect x="940" y="468" width="1" height="2" fill="#7a7a7a" />
<rect x="959" y="468" width="1" height="2" fill="#7a7a7a" />
<rect x="995" y="468" width="1" height="2" fill="#7a7a7a" />
<rect x="1014" y="468" width="1" height="2" fill="#7a7a7a" />
<rect x="1033" y="468" width="1" height="2" fill="#7a7a7a" />
<rect x="1069" y="468" width="1" height="2" fill="#7a7a7a" />
<rect x="1088" y="468" width="1" height="2" fill="#7a7a7a" />
<rect x="1107" y="468" width="1" height="2" fill="#7a7a7a" />
<rect x="1143" y="468" width="1" height="2" fill="#7a7a7a" />
<rect x="1162" y="468" width="1" height="2" fill="#7a7a7a" />
<rect x="1181" y="468" width="1" height="2" fill="#7a7a7a" />
<rect x="1217" y="468" width="1" height="2" fill="#7a7a7a" />
<rect x="1236" y="468" width="1" height="2" fill="#7a7a7a" />
<rect x="1255" y="468" width="1" height="2" fill="#7a7a7a" />
<rect x="1291" y="468" width="1" height="2" fill="#7a7a7a" />
<rect x="1310" y="468" width="1" height="2" fill="#7a7a7a" />
<rect x="1329" y="468" width="1" height="2" fill="#7a7a7a" />
<text transform="translate(655.52 484) scale(0.9690 1)" font-size="11" fill="#000" stroke="#000" stroke-width="0.15">00:00:13.064</text>
<text transform="translate(723.52 484) scale(0.9690 1)" font-size="11" fill="#000" stroke="#000" stroke-width="0.15">00:00:13.784</text>
<text transform="translate(797.52 484) scale(0.9706 1)" font-size="11" fill="#000" stroke="#000" stroke-width="0.15">00:00:14.573</text>
<text transform="translate(871.52 484) scale(0.9723 1)" font-size="11" fill="#000" stroke="#000" stroke-width="0.15">00:00:15.362</text>
<text transform="translate(945.52 484) scale(0.9715 1)" font-size="11" fill="#000" stroke="#000" stroke-width="0.15">00:00:16.151</text>
<text transform="translate(1019.52 484) scale(0.9698 1)" font-size="11" fill="#000" stroke="#000" stroke-width="0.15">00:00:16.940</text>
<text transform="translate(1093.52 484) scale(0.9715 1)" font-size="11" fill="#000" stroke="#000" stroke-width="0.15">00:00:17.729</text>
<text transform="translate(1167.52 484) scale(0.9706 1)" font-size="11" fill="#000" stroke="#000" stroke-width="0.15">00:00:18.518</text>
<text transform="translate(1241.52 484) scale(0.9723 1)" font-size="11" fill="#000" stroke="#000" stroke-width="0.15">00:00:19.307</text>
<text transform="translate(1315.52 484) scale(0.9706 1)" font-size="11" fill="#000" stroke="#000" stroke-width="0.15">00:00:20.096</text>
<rect x="687" y="536" width="1" height="4" fill="#7a7a7a" />
<rect x="755" y="536" width="1" height="4" fill="#7a7a7a" />
<rect x="829" y="536" width="1" height="4" fill="#7a7a7a" />
<rect x="903" y="536" width="1" height="4" fill="#7a7a7a" />
<rect x="977" y="536" width="1" height="4" fill="#7a7a7a" />
<rect x="1051" y="536" width="1" height="4" fill="#7a7a7a" />
<rect x="1125" y="536" width="1" height="4" fill="#7a7a7a" />
<rect x="1199" y="536" width="1" height="4" fill="#7a7a7a" />
<rect x="1273" y="536" width="1" height="4" fill="#7a7a7a" />
<rect x="704" y="536" width="1" height="2" fill="#7a7a7a" />
<rect x="721" y="536" width="1" height="2" fill="#7a7a7a" />
<rect x="738" y="536" width="1" height="2" fill="#7a7a7a" />
<rect x="773" y="536" width="1" height="2" fill="#7a7a7a" />
<rect x="792" y="536" width="1" height="2" fill="#7a7a7a" />
<rect x="811" y="536" width="1" height="2" fill="#7a7a7a" />
<rect x="847" y="536" width="1" height="2" fill="#7a7a7a" />
<rect x="866" y="536" width="1" height="2" fill="#7a7a7a" />
<rect x="885" y="536" width="1" height="2" fill="#7a7a7a" />
<rect x="921" y="536" width="1" height="2" fill="#7a7a7a" />
<rect x="940" y="536" width="1" height="2" fill="#7a7a7a" />
<rect x="959" y="536" width="1" height="2" fill="#7a7a7a" />
<rect x="995" y="536" width="1" height="2" fill="#7a7a7a" />
<rect x="1014" y="536" width="1" height="2" fill="#7a7a7a" />
<rect x="1033" y="536" width="1" height="2" fill="#7a7a7a" />
<rect x="1069" y="536" width="1" height="2" fill="#7a7a7a" />
<rect x="1088" y="536" width="1" height="2" fill="#7a7a7a" />
<rect x="1107" y="536" width="1" height="2" fill="#7a7a7a" />
<rect x="1143" y="536" width="1" height="2" fill="#7a7a7a" />
<rect x="1162" y="536" width="1" height="2" fill="#7a7a7a" />
<rect x="1181" y="536" width="1" height="2" fill="#7a7a7a" />
<rect x="1217" y="536" width="1" height="2" fill="#7a7a7a" />
<rect x="1236" y="536" width="1" height="2" fill="#7a7a7a" />
<rect x="1255" y="536" width="1" height="2" fill="#7a7a7a" />
<rect x="1291" y="536" width="1" height="2" fill="#7a7a7a" />
<rect x="1310" y="536" width="1" height="2" fill="#7a7a7a" />
<rect x="1329" y="536" width="1" height="2" fill="#7a7a7a" />
<text transform="translate(655.52 552) scale(0.9690 1)" font-size="11" fill="#000" stroke="#000" stroke-width="0.15">00:00:13.064</text>
<text transform="translate(723.52 552) scale(0.9690 1)" font-size="11" fill="#000" stroke="#000" stroke-width="0.15">00:00:13.784</text>
<text transform="translate(797.52 552) scale(0.9706 1)" font-size="11" fill="#000" stroke="#000" stroke-width="0.15">00:00:14.573</text>
<text transform="translate(871.52 552) scale(0.9723 1)" font-size="11" fill="#000" stroke="#000" stroke-width="0.15">00:00:15.362</text>
<text transform="translate(945.52 552) scale(0.9715 1)" font-size="11" fill="#000" stroke="#000" stroke-width="0.15">00:00:16.151</text>
<text transform="translate(1019.52 552) scale(0.9698 1)" font-size="11" fill="#000" stroke="#000" stroke-width="0.15">00:00:16.940</text>
<text transform="translate(1093.52 552) scale(0.9715 1)" font-size="11" fill="#000" stroke="#000" stroke-width="0.15">00:00:17.729</text>
<text transform="translate(1167.52 552) scale(0.9706 1)" font-size="11" fill="#000" stroke="#000" stroke-width="0.15">00:00:18.518</text>
<text transform="translate(1241.52 552) scale(0.9723 1)" font-size="11" fill="#000" stroke="#000" stroke-width="0.15">00:00:19.307</text>
<text transform="translate(1315.52 552) scale(0.9706 1)" font-size="11" fill="#000" stroke="#000" stroke-width="0.15">00:00:20.096</text>
<rect x="684" y="95" width="2" height="1" fill="#909090" />
<rect x="684" y="106" width="2" height="1" fill="#909090" />
<rect x="684" y="116" width="2" height="1" fill="#909090" />
<rect x="684" y="163" width="2" height="1" fill="#909090" />
<rect x="684" y="174" width="2" height="1" fill="#909090" />
<rect x="684" y="184" width="2" height="1" fill="#909090" />
<rect x="684" y="435" width="2" height="1" fill="#909090" />
<rect x="684" y="446" width="2" height="1" fill="#909090" />
<rect x="684" y="456" width="2" height="1" fill="#909090" />
<rect x="684" y="503" width="2" height="1" fill="#909090" />
<rect x="684" y="514" width="2" height="1" fill="#909090" />
<rect x="684" y="524" width="2" height="1" fill="#909090" />
<rect x="602" y="559" width="740" height="20" fill="#f0f0f0" />
<rect x="602" y="559" width="740" height="1" fill="#a0a0a0" />
<rect x="602" y="559" width="1" height="20" fill="#a0a0a0" />
<rect x="972" y="560" width="273" height="18" fill="#808080" />
<rect x="891" y="560" width="2" height="19" fill="#00ff00" />
<rect x="603" y="578" width="739" height="1" fill="#ffffff" />
<rect x="599" y="579" width="743" height="1" fill="#c8d5e6" />
</svg></body></html>
